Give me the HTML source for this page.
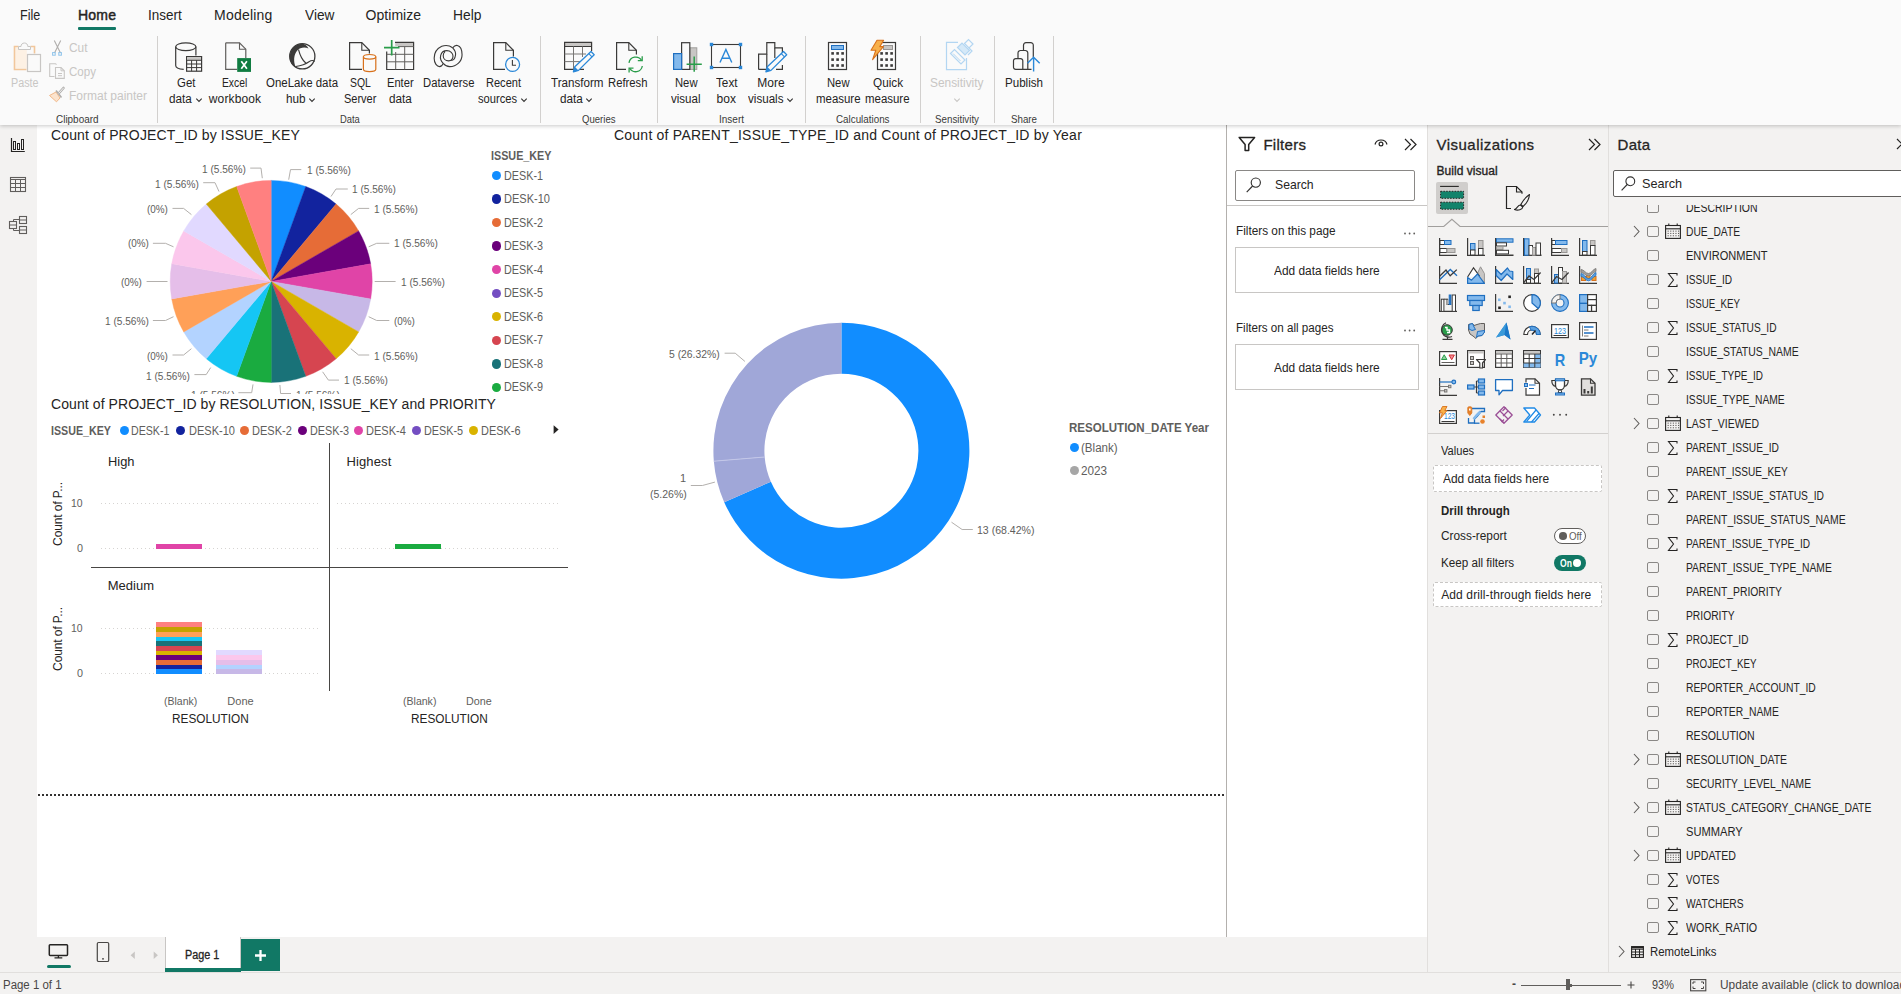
<!DOCTYPE html>
<html><head><meta charset="utf-8"><title>Power BI</title>
<style>
html,body{margin:0;padding:0;}
body{width:1901px;height:994px;overflow:hidden;position:relative;background:#f3f2f1;font-family:"Liberation Sans",sans-serif;}
.t{position:absolute;white-space:nowrap;display:block;}
.r{position:absolute;display:block;}
svg{overflow:visible;}
</style></head><body>
<div class="r" style="left:0px;top:0px;width:1901px;height:125px;background:#fafafa;box-shadow:0 1px 4px rgba(0,0,0,0.22);z-index:5;"></div>
<div class="r" style="left:0px;top:125px;width:37px;height:847px;background:#f3f2f1;"></div>
<div class="r" style="left:37px;top:125px;width:1189px;height:812px;background:#ffffff;"></div>
<div class="r" style="left:1226px;top:125px;width:1px;height:812px;background:#b3b0ad;"></div>
<div class="r" style="left:1227px;top:125px;width:200px;height:812px;background:#ffffff;"></div>
<div class="r" style="left:1427px;top:125px;width:1px;height:847px;background:#e1dfdd;"></div>
<div class="r" style="left:1428px;top:125px;width:180px;height:847px;background:#f3f2f1;"></div>
<div class="r" style="left:1608px;top:125px;width:1px;height:847px;background:#e1dfdd;"></div>
<div class="r" style="left:1609px;top:125px;width:292px;height:847px;background:#f3f2f1;"></div>
<div class="r" style="left:37px;top:937px;width:1390px;height:35px;background:#f3f2f1;"></div>
<div class="r" style="left:0px;top:972px;width:1901px;height:22px;background:#f3f2f1;border-top:1px solid #e1dfdd;box-sizing:border-box;"></div>
<div class="r" style="left:0;top:0;width:1901px;height:125px;z-index:6;">
<span class="t" style="left:20.00px;top:6.50px;font-size:14px;line-height:17px;color:#252423;transform:scaleX(0.8954);transform-origin:0 50%;">File</span>
<span class="t" style="left:78.10px;top:6.50px;font-size:14px;line-height:17px;color:#252423;letter-spacing:0.164px;-webkit-text-stroke:0.45px #252423;">Home</span>
<span class="t" style="left:147.80px;top:6.50px;font-size:14px;line-height:17px;color:#252423;transform:scaleX(0.9625);transform-origin:0 50%;">Insert</span>
<span class="t" style="left:214.10px;top:6.50px;font-size:14px;line-height:17px;color:#252423;letter-spacing:0.198px;">Modeling</span>
<span class="t" style="left:304.60px;top:6.50px;font-size:14px;line-height:17px;color:#252423;transform:scaleX(0.9770);transform-origin:0 50%;">View</span>
<span class="t" style="left:365.60px;top:6.50px;font-size:14px;line-height:17px;color:#252423;letter-spacing:0.033px;">Optimize</span>
<span class="t" style="left:452.90px;top:6.50px;font-size:14px;line-height:17px;color:#252423;transform:scaleX(0.9863);transform-origin:0 50%;">Help</span>
<div class="r" style="left:78px;top:27px;width:38px;height:3px;background:#117865;border-radius:1px;"></div>
<svg class="r" style="left:10px;top:40px;" width="34" height="34" viewBox="0 0 34 34">
<rect x="5.300" y="7.300" width="11.500" height="21.400" fill="#fdf1e4"/><path d="M8.5 6.5H4.5V29.5H16.5" fill="none" stroke="#f2c79b" stroke-width="1.6"/>
<path d="M20.5 6.5H24.5V13.5" fill="none" stroke="#f2c79b" stroke-width="1.6"/>
<path d="M8.5 9.5V6.5H11c0-2 1.2-3.5 3.4-3.5s3.4 1.5 3.4 3.5h2.7v3z" fill="#fafafa" stroke="#c8c6c4" stroke-width="1"/>
<rect x="17.5" y="14.5" width="13" height="17" fill="#fafafa" stroke="#c8c6c4" stroke-width="1.2"/>
</svg>
<span class="t" style="left:11.40px;top:75.70px;font-size:12px;line-height:14px;color:#c8c6c4;transform:scaleX(0.8962);transform-origin:0 50%;">Paste</span>
<svg class="r" style="left:50px;top:38px;" width="16" height="18" viewBox="0 0 16 18">
<path d="M4.3 2.5L10.5 15M10.7 2.5L4.5 15" stroke="#b0aeac" stroke-width="1.1" fill="none"/>
<rect x="2.6" y="14.6" width="2.6" height="2.6" fill="none" stroke="#8ec3ea" stroke-width="1"/>
<rect x="8.8" y="14.6" width="2.6" height="2.6" fill="none" stroke="#8ec3ea" stroke-width="1"/>
</svg>
<span class="t" style="left:69.00px;top:40.60px;font-size:12px;line-height:14px;color:#c8c6c4;transform:scaleX(0.9907);transform-origin:0 50%;">Cut</span>
<svg class="r" style="left:48px;top:62px;" width="18" height="18" viewBox="0 0 18 18">
<path d="M6.5 14.5H1.7V1.7H7.5L8.5 2.7" fill="none" stroke="#c8c6c4" stroke-width="1.1"/>
<path d="M7.5 5.5H13L16.3 8.8V16.4H7.5z" fill="#fafafa" stroke="#c8c6c4" stroke-width="1.1"/>
<path d="M13 5.5V8.8H16.3M10 11.5H14M10 13.7H14" fill="none" stroke="#c8c6c4" stroke-width="1"/>
</svg>
<span class="t" style="left:69.00px;top:64.80px;font-size:12px;line-height:14px;color:#c8c6c4;transform:scaleX(0.9638);transform-origin:0 50%;">Copy</span>
<svg class="r" style="left:48px;top:86px;" width="18" height="18" viewBox="0 0 18 18">
<path d="M1.5 9.5L8 6L12 12L8.5 15.8z" fill="#fbe3cd" stroke="#f2b888" stroke-width="1"/>
<path d="M8 4.5L13.5 11.5" stroke="#b0aeac" stroke-width="1.6"/>
<path d="M11 7L15.5 2" stroke="#b0aeac" stroke-width="2.6" stroke-linecap="round"/>
<path d="M11 7L15.5 2" stroke="#fafafa" stroke-width="0.9" stroke-linecap="round"/>
</svg>
<span class="t" style="left:69.00px;top:88.80px;font-size:12px;line-height:14px;color:#c8c6c4;transform:scaleX(0.9996);transform-origin:0 50%;">Format painter</span>
<span class="t" style="left:55.75px;top:112.50px;font-size:11px;line-height:13px;color:#3b3a39;transform:scaleX(0.9027);transform-origin:0 50%;">Clipboard</span>
<div class="r" style="left:157px;top:36px;width:1px;height:87px;background:#d2d0ce;"></div>
<div class="r" style="left:540px;top:36px;width:1px;height:87px;background:#d2d0ce;"></div>
<div class="r" style="left:657px;top:36px;width:1px;height:87px;background:#d2d0ce;"></div>
<div class="r" style="left:805px;top:36px;width:1px;height:87px;background:#d2d0ce;"></div>
<div class="r" style="left:920px;top:36px;width:1px;height:87px;background:#d2d0ce;"></div>
<div class="r" style="left:994px;top:36px;width:1px;height:87px;background:#d2d0ce;"></div>
<div class="r" style="left:1053px;top:36px;width:1px;height:87px;background:#d2d0ce;"></div>
<span class="t" style="left:177.20px;top:75.70px;font-size:12px;line-height:14px;color:#252423;transform:scaleX(0.9513);transform-origin:0 50%;">Get</span>
<span class="t" style="left:169.30px;top:91.60px;font-size:12px;line-height:14px;color:#252423;transform:scaleX(0.9762);transform-origin:0 50%;">data</span>
<svg class="r" style="left:195.60000000000002px;top:97.5px;" width="6" height="4" viewBox="0 0 6 4"><path d="M0.3 0.7L3 3.400L5.700 0.700" fill="none" stroke="#323130" stroke-width="1.1"/></svg>
<span class="t" style="left:222.40px;top:75.70px;font-size:12px;line-height:14px;color:#252423;transform:scaleX(0.8588);transform-origin:0 50%;">Excel</span>
<span class="t" style="left:208.80px;top:91.60px;font-size:12px;line-height:14px;color:#252423;letter-spacing:0.130px;">workbook</span>
<span class="t" style="left:265.60px;top:75.70px;font-size:12px;line-height:14px;color:#252423;transform:scaleX(0.9550);transform-origin:0 50%;">OneLake data</span>
<span class="t" style="left:286.10px;top:91.60px;font-size:12px;line-height:14px;color:#252423;transform:scaleX(0.9789);transform-origin:0 50%;">hub</span>
<svg class="r" style="left:309.20000000000005px;top:97.5px;" width="6" height="4" viewBox="0 0 6 4"><path d="M0.3 0.7L3 3.400L5.700 0.700" fill="none" stroke="#323130" stroke-width="1.1"/></svg>
<span class="t" style="left:349.60px;top:75.70px;font-size:12px;line-height:14px;color:#252423;transform:scaleX(0.8662);transform-origin:0 50%;">SQL</span>
<span class="t" style="left:343.80px;top:91.60px;font-size:12px;line-height:14px;color:#252423;transform:scaleX(0.9167);transform-origin:0 50%;">Server</span>
<span class="t" style="left:386.90px;top:75.70px;font-size:12px;line-height:14px;color:#252423;transform:scaleX(0.9274);transform-origin:0 50%;">Enter</span>
<span class="t" style="left:388.80px;top:91.60px;font-size:12px;line-height:14px;color:#252423;transform:scaleX(0.9762);transform-origin:0 50%;">data</span>
<span class="t" style="left:422.60px;top:75.70px;font-size:12px;line-height:14px;color:#252423;transform:scaleX(0.9398);transform-origin:0 50%;">Dataverse</span>
<span class="t" style="left:486.00px;top:75.70px;font-size:12px;line-height:14px;color:#252423;transform:scaleX(0.9205);transform-origin:0 50%;">Recent</span>
<span class="t" style="left:478.30px;top:91.60px;font-size:12px;line-height:14px;color:#252423;transform:scaleX(0.9282);transform-origin:0 50%;">sources</span>
<svg class="r" style="left:520.8px;top:97.5px;" width="6" height="4" viewBox="0 0 6 4"><path d="M0.3 0.7L3 3.400L5.700 0.700" fill="none" stroke="#323130" stroke-width="1.1"/></svg>
<span class="t" style="left:339.60px;top:112.50px;font-size:11px;line-height:13px;color:#3b3a39;transform:scaleX(0.8521);transform-origin:0 50%;">Data</span>
<span class="t" style="left:550.75px;top:75.70px;font-size:12px;line-height:14px;color:#252423;transform:scaleX(0.9681);transform-origin:0 50%;">Transform</span>
<span class="t" style="left:559.90px;top:91.60px;font-size:12px;line-height:14px;color:#252423;transform:scaleX(0.9762);transform-origin:0 50%;">data</span>
<svg class="r" style="left:586.1999999999999px;top:97.5px;" width="6" height="4" viewBox="0 0 6 4"><path d="M0.3 0.7L3 3.400L5.700 0.700" fill="none" stroke="#323130" stroke-width="1.1"/></svg>
<span class="t" style="left:607.85px;top:75.70px;font-size:12px;line-height:14px;color:#252423;transform:scaleX(0.9401);transform-origin:0 50%;">Refresh</span>
<span class="t" style="left:582.25px;top:112.50px;font-size:11px;line-height:13px;color:#3b3a39;transform:scaleX(0.8698);transform-origin:0 50%;">Queries</span>
<span class="t" style="left:674.75px;top:75.70px;font-size:12px;line-height:14px;color:#252423;transform:scaleX(0.9373);transform-origin:0 50%;">New</span>
<span class="t" style="left:671.25px;top:91.60px;font-size:12px;line-height:14px;color:#252423;transform:scaleX(0.9615);transform-origin:0 50%;">visual</span>
<span class="t" style="left:715.55px;top:75.70px;font-size:12px;line-height:14px;color:#252423;transform:scaleX(0.9769);transform-origin:0 50%;">Text</span>
<span class="t" style="left:716.55px;top:91.60px;font-size:12px;line-height:14px;color:#252423;letter-spacing:0.051px;">box</span>
<span class="t" style="left:757.25px;top:75.70px;font-size:12px;line-height:14px;color:#252423;letter-spacing:0.040px;">More</span>
<span class="t" style="left:747.55px;top:91.60px;font-size:12px;line-height:14px;color:#252423;transform:scaleX(0.9678);transform-origin:0 50%;">visuals</span>
<svg class="r" style="left:786.55px;top:97.5px;" width="6" height="4" viewBox="0 0 6 4"><path d="M0.3 0.7L3 3.400L5.700 0.700" fill="none" stroke="#323130" stroke-width="1.1"/></svg>
<span class="t" style="left:719.00px;top:112.50px;font-size:11px;line-height:13px;color:#3b3a39;transform:scaleX(0.9087);transform-origin:0 50%;">Insert</span>
<span class="t" style="left:827.05px;top:75.70px;font-size:12px;line-height:14px;color:#252423;transform:scaleX(0.9373);transform-origin:0 50%;">New</span>
<span class="t" style="left:816.05px;top:91.60px;font-size:12px;line-height:14px;color:#252423;transform:scaleX(0.9531);transform-origin:0 50%;">measure</span>
<span class="t" style="left:872.60px;top:75.70px;font-size:12px;line-height:14px;color:#252423;transform:scaleX(0.9780);transform-origin:0 50%;">Quick</span>
<span class="t" style="left:865.35px;top:91.60px;font-size:12px;line-height:14px;color:#252423;transform:scaleX(0.9531);transform-origin:0 50%;">measure</span>
<span class="t" style="left:835.85px;top:112.50px;font-size:11px;line-height:13px;color:#3b3a39;transform:scaleX(0.8929);transform-origin:0 50%;">Calculations</span>
<span class="t" style="left:930.25px;top:75.70px;font-size:12px;line-height:14px;color:#c8c6c4;transform:scaleX(0.9904);transform-origin:0 50%;">Sensitivity</span>
<svg class="r" style="left:954px;top:97.5px;" width="6" height="4" viewBox="0 0 6 4"><path d="M0.3 0.7L3 3.400L5.700 0.700" fill="none" stroke="#c8c6c4" stroke-width="1.1"/></svg>
<span class="t" style="left:935.00px;top:112.50px;font-size:11px;line-height:13px;color:#3b3a39;transform:scaleX(0.8886);transform-origin:0 50%;">Sensitivity</span>
<span class="t" style="left:1004.70px;top:75.70px;font-size:12px;line-height:14px;color:#252423;transform:scaleX(0.9655);transform-origin:0 50%;">Publish</span>
<span class="t" style="left:1010.70px;top:112.50px;font-size:11px;line-height:13px;color:#3b3a39;transform:scaleX(0.8858);transform-origin:0 50%;">Share</span>
<svg class="r" style="left:173px;top:40px;" width="32" height="34" viewBox="0 0 32 34">
<path d="M2.7 6.8V25.5c0 2.2 3.5 3.6 8 3.9" fill="none" stroke="#3b3a39" stroke-width="1.2"/>
<path d="M22.9 6.8V15.5" fill="none" stroke="#3b3a39" stroke-width="1.2"/>
<ellipse cx="12.8" cy="6.8" rx="10.1" ry="3.9" fill="none" stroke="#3b3a39" stroke-width="1.2"/>
<rect x="13.6" y="16.6" width="15" height="14.6" fill="#fafafa" stroke="#3b3a39" stroke-width="1.2"/>
<rect x="14.2" y="17.2" width="13.8" height="2.8" fill="#c8c6c4"/>
<path d="M13.6 20.3H28.6M13.6 24H28.6M13.6 27.6H28.6M18.6 20.3V31.2M23.6 20.3V31.2" stroke="#3b3a39" stroke-width="1" fill="none"/>
</svg>
<svg class="r" style="left:223px;top:40px;" width="30" height="34" viewBox="0 0 30 34">
<path d="M2.7 2.8H16.5L22.8 9.2V18M14 29.4H2.7V2.8" fill="none" stroke="#605e5c" stroke-width="1.2"/>
<path d="M16.5 2.8V9.2H22.8" fill="none" stroke="#605e5c" stroke-width="1.1"/>
<rect x="14.2" y="18.1" width="13.8" height="13.8" fill="#107c41"/>
<path d="M18.3 21.3L23.9 28.8M23.9 21.3L18.3 28.8" stroke="#ffffff" stroke-width="1.7" fill="none"/>
</svg>
<svg class="r" style="left:287px;top:41px;" width="32" height="32" viewBox="0 0 32 32">
<circle cx="15.3" cy="15.3" r="12.6" fill="none" stroke="#3b3a39" stroke-width="1.3"/>
<path d="M14 2.8C6 4 2.6 10 2.8 16.5c.2 5 3 8.3 6 9.800C6.300 21 6.500 13.500 10.500 9.300 13 6.600 17.500 5.800 21.500 7.500 19.800 4.300 17.500 2.600 14 2.800z" fill="#3b3a39"/>
<path d="M11.500 8.500C13 14.500 15.500 19.500 19 22.300" fill="none" stroke="#3b3a39" stroke-width="1.100"/>
<path d="M8.800 25.500C14 24.800 18.500 23.300 22 20.800 24.500 19 26.500 19.300 27.600 20.500" fill="none" stroke="#3b3a39" stroke-width="1.100"/>
</svg>
<svg class="r" style="left:347px;top:40px;" width="32" height="34" viewBox="0 0 32 34">
<path d="M15 29.400H2.600V2.700H14.800L22.400 10.300V13.600" fill="none" stroke="#3b3a39" stroke-width="1.200"/>
<path d="M14.800 2.700V10.300H22.400" fill="none" stroke="#3b3a39" stroke-width="1.100"/>
<path d="M16.400 16.800V29.300c0 1.300 2.800 2.300 6.200 2.300s6.200-1 6.200-2.300V16.800" fill="#fafafa" stroke="#d8711c" stroke-width="1.200"/>
<ellipse cx="22.600" cy="16.800" rx="6.200" ry="2.300" fill="#fafafa" stroke="#d8711c" stroke-width="1.200"/>
</svg>
<svg class="r" style="left:384px;top:38px;" width="32" height="34" viewBox="0 0 32 34">
<rect x="11.200" y="4.800" width="17.900" height="3.200" fill="#c8c6c4"/>
<path d="M11 4.300H29.600V31.500H2.700V13.500" fill="none" stroke="#3b3a39" stroke-width="1.200"/>
<path d="M14 8.600H29.600M2.700 16.300H29.600M2.700 23.800H29.600M11.700 14V31.500M20.700 8.600V31.500" fill="none" stroke="#605e5c" stroke-width="1"/>
<path d="M0 9.700H15.500M7.700 2V17.500" stroke="#2a9d4a" stroke-width="1.700" fill="none"/>
</svg>
<svg class="r" style="left:428px;top:38px;" width="40" height="36" viewBox="0 0 40 36"><g transform="scale(0.03623)" fill="none" stroke="#3b3a39" stroke-width="31">
<path d="M680 270C600 210 480 190 380 230C250 290 170 420 170 560C170 700 250 790 320 790C370 790 400 750 420 700C360 640 330 560 350 480C370 400 440 350 520 350C620 350 690 420 690 500C690 580 640 630 570 630C480 630 420 570 420 490C420 430 450 390 470 375"/>
<path d="M680 270C720 220 770 195 810 205C890 225 940 330 940 460C940 640 790 790 600 790C530 790 460 750 420 700"/>
<path d="M680 270C740 330 770 400 760 470C745 570 700 620 640 620"/>
</g></svg>
<svg class="r" style="left:491px;top:40px;" width="32" height="34" viewBox="0 0 32 34">
<path d="M14 29.400H2.600V2.700H14.800L22.400 10.300V16.500" fill="none" stroke="#3b3a39" stroke-width="1.200"/>
<path d="M14.800 2.700V10.300H22.400" fill="none" stroke="#3b3a39" stroke-width="1.100"/>
<circle cx="21.600" cy="24.400" r="7" fill="#fafafa" stroke="#2b88d8" stroke-width="1.300"/>
<path d="M21.400 20V25.200H25" fill="none" stroke="#3b3a39" stroke-width="1.100"/>
</svg>
<svg class="r" style="left:562px;top:40px;" width="34" height="34" viewBox="0 0 34 34">
<rect x="2.600" y="2.700" width="27" height="3.400" fill="#c8c6c4"/>
<path d="M22 29.400H2.600V2.400H29.600V11" fill="none" stroke="#3b3a39" stroke-width="1.200"/>
<path d="M2.600 6.500H29.600" stroke="#3b3a39" stroke-width="1"/>
<path d="M2.600 14H24M2.600 21.600H18M11.500 6.500V29.400M20.500 6.500V17" fill="none" stroke="#797775" stroke-width="1"/>
<path d="M29 11.500L32.200 14.700 16.500 30.400 11.400 31.800 12.800 26.700z" fill="#fafafa" stroke="#2b88d8" stroke-width="1.300" stroke-linejoin="round"/>
<path d="M12.800 26.700L16.500 30.400 11.400 31.800z" fill="#2b88d8"/>
<path d="M26.800 13.700L30 16.900" stroke="#2b88d8" stroke-width="1.100"/>
</svg>
<svg class="r" style="left:614px;top:40px;" width="32" height="34" viewBox="0 0 32 34">
<path d="M12 29.400H2.600V2.700H14.800L22.400 10.300V14.500" fill="none" stroke="#3b3a39" stroke-width="1.200"/>
<path d="M14.800 2.700V10.300H22.400" fill="none" stroke="#3b3a39" stroke-width="1.100"/>
<path d="M15 22.800A6.800 6.800 0 0 1 27.600 20.500" fill="none" stroke="#2a9d4a" stroke-width="1.300"/>
<path d="M28.200 16.300V20.700H23.800" fill="none" stroke="#2a9d4a" stroke-width="1.300"/>
<path d="M28.300 26A6.800 6.800 0 0 1 15.700 28.300" fill="none" stroke="#2a9d4a" stroke-width="1.300"/>
<path d="M15.100 32.500V28.100H19.500" fill="none" stroke="#2a9d4a" stroke-width="1.300"/>
</svg>
<svg class="r" style="left:671px;top:40px;" width="34" height="34" viewBox="0 0 34 34">
<rect x="18.800" y="7.800" width="7" height="21.600" fill="#c8c6c4" stroke="#a19f9d" stroke-width="1"/>
<rect x="10.600" y="2.700" width="8.200" height="26.700" fill="#fafafa" stroke="#3b3a39" stroke-width="1.200"/>
<rect x="2.600" y="13.600" width="8" height="15.800" fill="#83b9ec" stroke="#1f6fc0" stroke-width="1.200"/>
<path d="M15.600 24.200H30.800M23.200 16.600V31.800" stroke="#2a9d4a" stroke-width="1.500" fill="none"/>
</svg>
<svg class="r" style="left:709px;top:42px;" width="34" height="28" viewBox="0 0 34 28">
<rect x="2.500" y="2.500" width="29" height="23" fill="none" stroke="#3b3a39" stroke-width="1.100"/>
<rect x="0.800" y="0.800" width="3.400" height="3.400" fill="#2b88d8"/><rect x="29.800" y="0.800" width="3.400" height="3.400" fill="#2b88d8"/>
<rect x="0.800" y="23.800" width="3.400" height="3.400" fill="#2b88d8"/><rect x="29.800" y="23.800" width="3.400" height="3.400" fill="#2b88d8"/>
<path d="M11 20.500L16.900 7.500 22.800 20.500M13 16.200H20.800" fill="none" stroke="#2b88d8" stroke-width="1.400"/>
</svg>
<svg class="r" style="left:756px;top:40px;" width="34" height="34" viewBox="0 0 34 34">
<path d="M2.600 29.400V14.200H10.800V2.700H18.800V7.800H26.400V13" fill="none" stroke="#3b3a39" stroke-width="1.200"/>
<path d="M10.800 14.200V29.400M18.800 7.800V18M2.600 29.400H12M26.400 25V29.400H20" fill="none" stroke="#3b3a39" stroke-width="1.200"/>
<path d="M27.500 11.500L30.700 14.700 15 30.400 9.900 31.800 11.300 26.700z" fill="#fafafa" stroke="#2b88d8" stroke-width="1.300" stroke-linejoin="round"/>
<path d="M11.300 26.700L15 30.400 9.900 31.800z" fill="#2b88d8"/>
<path d="M25.300 13.700L28.500 16.900" stroke="#2b88d8" stroke-width="1.100"/>
</svg>
<svg class="r" style="left:828px;top:42px;" width="20" height="30" viewBox="0 0 20 30"><rect x="0.500" y="0.500" width="18" height="27" fill="#fafafa" stroke="#3b3a39" stroke-width="1.200"/><rect x="3.500" y="3.500" width="12" height="4" fill="#83b9ec" stroke="#1f6fc0" stroke-width="1"/><rect x="3.3" y="10.1" width="2.600" height="2.600" fill="#3b3a39"/><rect x="8.3" y="10.1" width="2.600" height="2.600" fill="#3b3a39"/><rect x="13.3" y="10.1" width="2.600" height="2.600" fill="#3b3a39"/><rect x="3.3" y="16.3" width="2.600" height="2.600" fill="#3b3a39"/><rect x="8.3" y="16.3" width="2.600" height="2.600" fill="#3b3a39"/><rect x="13.3" y="16.3" width="2.600" height="2.600" fill="#3b3a39"/><rect x="3.3" y="22.2" width="2.600" height="2.600" fill="#3b3a39"/><rect x="8.3" y="22.2" width="2.600" height="2.600" fill="#3b3a39"/><rect x="13.3" y="22.2" width="2.600" height="2.600" fill="#3b3a39"/></svg>
<svg class="r" style="left:877px;top:42px;" width="20" height="30" viewBox="0 0 20 30"><rect x="0.500" y="0.500" width="18" height="27" fill="#fafafa" stroke="#3b3a39" stroke-width="1.200"/><rect x="6.500" y="3.500" width="9" height="4" fill="#c8c6c4" stroke="#979593" stroke-width="1"/><rect x="3.3" y="10.1" width="2.600" height="2.600" fill="#3b3a39"/><rect x="8.3" y="10.1" width="2.600" height="2.600" fill="#3b3a39"/><rect x="13.3" y="10.1" width="2.600" height="2.600" fill="#3b3a39"/><rect x="3.3" y="16.3" width="2.600" height="2.600" fill="#3b3a39"/><rect x="8.3" y="16.3" width="2.600" height="2.600" fill="#3b3a39"/><rect x="13.3" y="16.3" width="2.600" height="2.600" fill="#3b3a39"/><rect x="3.3" y="22.2" width="2.600" height="2.600" fill="#3b3a39"/><rect x="8.3" y="22.2" width="2.600" height="2.600" fill="#3b3a39"/><rect x="13.3" y="22.2" width="2.600" height="2.600" fill="#3b3a39"/></svg>
<svg class="r" style="left:869px;top:39px;" width="18" height="22" viewBox="0 0 18 22"><path d="M8 1.200H14.600L10.800 7.600H14.400L3.600 20.600 6.800 11.200H2z" fill="#f8b04a" stroke="#d8711c" stroke-width="1.100" stroke-linejoin="round"/></svg>
<svg class="r" style="left:944px;top:38px;" width="32" height="34" viewBox="0 0 32 34">
<path d="M14 4.400H2.500V31.600H22.500V20" fill="none" stroke="#b3d6f2" stroke-width="1.200"/>
<path d="M6.500 15.500L10.500 11.500 21 22 17 26z" fill="none" stroke="#b3d6f2" stroke-width="1.200"/>
<path d="M9 15.500L16.500 23" stroke="#b3d6f2" stroke-width="1"/>
<path d="M13.500 9.500L18 5 25.500 12.500 21 17z" fill="#d5e9f8" stroke="#b3d6f2" stroke-width="1.200"/>
<path d="M20.500 5.500L24.500 1.500 29 6 25 10z" fill="#fafafa" stroke="#b3d6f2" stroke-width="1.200"/>
<path d="M25 10L28 13 24 17" fill="none" stroke="#b3d6f2" stroke-width="1.200"/>
</svg>
<svg class="r" style="left:1011px;top:40px;" width="32" height="34" viewBox="0 0 32 34">
<path d="M12.500 10.500V5.200a2.500 2.500 0 0 1 2.500-2.500h4.800a2.500 2.500 0 0 1 2.500 2.500V17" fill="none" stroke="#3b3a39" stroke-width="1.200"/>
<path d="M7 18.500V13a2.500 2.500 0 0 1 2.500-2.500h4.800a2.500 2.500 0 0 1 2.500 2.500V29.400" fill="none" stroke="#3b3a39" stroke-width="1.200"/>
<path d="M11.800 29.400H4.700a2.200 2.200 0 0 1-2.200-2.200V20.800a2.200 2.200 0 0 1 2.200-2.200h4.900a2.200 2.200 0 0 1 2.200 2.200zM11.800 29.400H20.500" fill="none" stroke="#3b3a39" stroke-width="1.200"/>
<path d="M22.600 31.600V17.500M16.500 23.300L22.600 17.200 28.700 23.300" fill="none" stroke="#2b88d8" stroke-width="1.400"/>
</svg>
</div>
<span class="t" style="left:51.00px;top:126.50px;font-size:14px;line-height:17px;color:#252423;letter-spacing:0.146px;">Count of PROJECT_ID by ISSUE_KEY</span>
<span class="t" style="left:614.00px;top:126.50px;font-size:14px;line-height:17px;color:#252423;letter-spacing:0.227px;">Count of PARENT_ISSUE_TYPE_ID and Count of PROJECT_ID by Year</span>
<span class="t" style="left:51.00px;top:395.50px;font-size:14px;line-height:17px;color:#252423;letter-spacing:0.086px;">Count of PROJECT_ID by RESOLUTION, ISSUE_KEY and PRIORITY</span>
<div class="r" style="left:37px;top:125px;width:560px;height:268.500px;overflow:hidden;">
<svg class="r" style="left:0;top:0" width="560" height="280" viewBox="37 125 560 280"><path d="M271.20 281.40L271.20 180.40A101.0 101.0 0 0 1 305.74 186.49Z" fill="#118DFF" stroke="#118DFF" stroke-width="0.4"/><path d="M271.20 281.40L305.74 186.49A101.0 101.0 0 0 1 336.12 204.03Z" fill="#12239E" stroke="#12239E" stroke-width="0.4"/><path d="M271.20 281.40L336.12 204.03A101.0 101.0 0 0 1 358.67 230.90Z" fill="#E66C37" stroke="#E66C37" stroke-width="0.4"/><path d="M271.20 281.40L358.67 230.90A101.0 101.0 0 0 1 370.67 263.86Z" fill="#6B007B" stroke="#6B007B" stroke-width="0.4"/><path d="M271.20 281.40L370.67 263.86A101.0 101.0 0 0 1 370.67 298.94Z" fill="#E044A7" stroke="#E044A7" stroke-width="0.4"/><path d="M271.20 281.40L370.67 298.94A101.0 101.0 0 0 1 358.67 331.90Z" fill="#C7B8E7" stroke="#C7B8E7" stroke-width="0.4"/><path d="M271.20 281.40L358.67 331.90A101.0 101.0 0 0 1 336.12 358.77Z" fill="#D9B300" stroke="#D9B300" stroke-width="0.4"/><path d="M271.20 281.40L336.12 358.77A101.0 101.0 0 0 1 305.74 376.31Z" fill="#D64550" stroke="#D64550" stroke-width="0.4"/><path d="M271.20 281.40L305.74 376.31A101.0 101.0 0 0 1 271.20 382.40Z" fill="#197278" stroke="#197278" stroke-width="0.4"/><path d="M271.20 281.40L271.20 382.40A101.0 101.0 0 0 1 236.66 376.31Z" fill="#1AAB40" stroke="#1AAB40" stroke-width="0.4"/><path d="M271.20 281.40L236.66 376.31A101.0 101.0 0 0 1 206.28 358.77Z" fill="#15C6F4" stroke="#15C6F4" stroke-width="0.4"/><path d="M271.20 281.40L206.28 358.77A101.0 101.0 0 0 1 183.73 331.90Z" fill="#B3D3FF" stroke="#B3D3FF" stroke-width="0.4"/><path d="M271.20 281.40L183.73 331.90A101.0 101.0 0 0 1 171.73 298.94Z" fill="#FFA058" stroke="#FFA058" stroke-width="0.4"/><path d="M271.20 281.40L171.73 298.94A101.0 101.0 0 0 1 171.73 263.86Z" fill="#E5BEE9" stroke="#E5BEE9" stroke-width="0.4"/><path d="M271.20 281.40L171.73 263.86A101.0 101.0 0 0 1 183.73 230.90Z" fill="#FBC7EC" stroke="#FBC7EC" stroke-width="0.4"/><path d="M271.20 281.40L183.73 230.90A101.0 101.0 0 0 1 206.28 204.03Z" fill="#E1D9FF" stroke="#E1D9FF" stroke-width="0.4"/><path d="M271.20 281.40L206.28 204.03A101.0 101.0 0 0 1 236.66 186.49Z" fill="#C4A200" stroke="#C4A200" stroke-width="0.4"/><path d="M271.20 281.40L236.66 186.49A101.0 101.0 0 0 1 271.20 180.40Z" fill="#FF8080" stroke="#FF8080" stroke-width="0.4"/><path d="M288.7 179.7L290.5 169.6L301.3 169.6" fill="none" stroke="#b3b0ad" stroke-width="1"/><path d="M331.0 196.5L336.0 189.0L347.8 189.0" fill="none" stroke="#b3b0ad" stroke-width="1"/><path d="M350.8 214.6L358.6 208.4L369.2 208.4" fill="none" stroke="#b3b0ad" stroke-width="1"/><path d="M368.7 246.8L376.7 243.3L389.3 243.3" fill="none" stroke="#b3b0ad" stroke-width="1"/><path d="M374.7 281.5L395.6 281.5" fill="none" stroke="#b3b0ad" stroke-width="1"/><path d="M368.7 316.7L376.7 320.5L389.3 320.5" fill="none" stroke="#b3b0ad" stroke-width="1"/><path d="M350.8 348.7L358.6 355.0L369.2 355.0" fill="none" stroke="#b3b0ad" stroke-width="1"/><path d="M322.6 371.8L328.4 380.1L339.0 380.1" fill="none" stroke="#b3b0ad" stroke-width="1"/><path d="M279.9 385.0L280.6 393.5L291.0 393.5" fill="none" stroke="#b3b0ad" stroke-width="1"/><path d="M253.0 384.4L251.7 392.7L238.4 392.7" fill="none" stroke="#b3b0ad" stroke-width="1"/><path d="M210.7 367.6L206.2 374.6L194.4 374.6" fill="none" stroke="#b3b0ad" stroke-width="1"/><path d="M191.4 348.7L183.6 355.0L172.5 355.0" fill="none" stroke="#b3b0ad" stroke-width="1"/><path d="M173.5 316.7L165.5 320.5L152.9 320.5" fill="none" stroke="#b3b0ad" stroke-width="1"/><path d="M167.5 281.5L146.6 281.5" fill="none" stroke="#b3b0ad" stroke-width="1"/><path d="M173.5 246.8L165.5 243.3L152.9 243.3" fill="none" stroke="#b3b0ad" stroke-width="1"/><path d="M191.4 214.6L183.6 208.4L172.5 208.4" fill="none" stroke="#b3b0ad" stroke-width="1"/><path d="M219.0 191.5L215.0 182.7L203.2 182.7" fill="none" stroke="#b3b0ad" stroke-width="1"/><path d="M262.3 178.2L261.0 168.1L250.2 168.1" fill="none" stroke="#b3b0ad" stroke-width="1"/></svg>
<span class="t" style="left:269.80px;top:38.60px;font-size:11px;line-height:13px;color:#605e5c;transform:scaleX(0.9184);transform-origin:0 50%;">1 (5.56%)</span>
<span class="t" style="left:315.10px;top:58.00px;font-size:11px;line-height:13px;color:#605e5c;transform:scaleX(0.9184);transform-origin:0 50%;">1 (5.56%)</span>
<span class="t" style="left:337.20px;top:78.10px;font-size:11px;line-height:13px;color:#605e5c;transform:scaleX(0.9184);transform-origin:0 50%;">1 (5.56%)</span>
<span class="t" style="left:356.80px;top:111.80px;font-size:11px;line-height:13px;color:#605e5c;transform:scaleX(0.9184);transform-origin:0 50%;">1 (5.56%)</span>
<span class="t" style="left:363.90px;top:150.50px;font-size:11px;line-height:13px;color:#605e5c;transform:scaleX(0.9184);transform-origin:0 50%;">1 (5.56%)</span>
<span class="t" style="left:356.60px;top:190.00px;font-size:11px;line-height:13px;color:#605e5c;transform:scaleX(0.8999);transform-origin:0 50%;">(0%)</span>
<span class="t" style="left:337.20px;top:224.70px;font-size:11px;line-height:13px;color:#605e5c;transform:scaleX(0.9184);transform-origin:0 50%;">1 (5.56%)</span>
<span class="t" style="left:306.50px;top:249.40px;font-size:11px;line-height:13px;color:#605e5c;transform:scaleX(0.9184);transform-origin:0 50%;">1 (5.56%)</span>
<span class="t" style="left:259.20px;top:263.80px;font-size:11px;line-height:13px;color:#605e5c;transform:scaleX(0.9184);transform-origin:0 50%;">1 (5.56%)</span>
<span class="t" style="left:153.80px;top:263.80px;font-size:11px;line-height:13px;color:#605e5c;transform:scaleX(0.9184);transform-origin:0 50%;">1 (5.56%)</span>
<span class="t" style="left:109.30px;top:244.90px;font-size:11px;line-height:13px;color:#605e5c;transform:scaleX(0.9184);transform-origin:0 50%;">1 (5.56%)</span>
<span class="t" style="left:110.30px;top:224.70px;font-size:11px;line-height:13px;color:#605e5c;transform:scaleX(0.8999);transform-origin:0 50%;">(0%)</span>
<span class="t" style="left:67.60px;top:190.00px;font-size:11px;line-height:13px;color:#605e5c;transform:scaleX(0.9184);transform-origin:0 50%;">1 (5.56%)</span>
<span class="t" style="left:83.70px;top:150.50px;font-size:11px;line-height:13px;color:#605e5c;transform:scaleX(0.8999);transform-origin:0 50%;">(0%)</span>
<span class="t" style="left:90.50px;top:111.80px;font-size:11px;line-height:13px;color:#605e5c;transform:scaleX(0.8999);transform-origin:0 50%;">(0%)</span>
<span class="t" style="left:110.30px;top:78.10px;font-size:11px;line-height:13px;color:#605e5c;transform:scaleX(0.8999);transform-origin:0 50%;">(0%)</span>
<span class="t" style="left:117.90px;top:52.50px;font-size:11px;line-height:13px;color:#605e5c;transform:scaleX(0.9184);transform-origin:0 50%;">1 (5.56%)</span>
<span class="t" style="left:165.10px;top:38.10px;font-size:11px;line-height:13px;color:#605e5c;transform:scaleX(0.9184);transform-origin:0 50%;">1 (5.56%)</span>
</div>
<span class="t" style="left:491.00px;top:148.70px;font-size:12px;line-height:14px;color:#605e5c;font-weight:bold;transform:scaleX(0.8982);transform-origin:0 50%;">ISSUE_KEY</span>
<div class="r" style="left:480px;top:160px;width:110px;height:233.500px;overflow:hidden;">
<div class="r" style="left:11.800000000000011px;top:10.900000000000006px;width:9.4px;height:9.4px;background:#118DFF;border-radius:50%;"></div>
<span class="t" style="left:24.10px;top:8.60px;font-size:12px;line-height:14px;color:#605e5c;transform:scaleX(0.8997);transform-origin:0 50%;">DESK-1</span>
<div class="r" style="left:11.800000000000011px;top:34.43000000000001px;width:9.4px;height:9.4px;background:#12239E;border-radius:50%;"></div>
<span class="t" style="left:24.10px;top:32.13px;font-size:12px;line-height:14px;color:#605e5c;transform:scaleX(0.9196);transform-origin:0 50%;">DESK-10</span>
<div class="r" style="left:11.800000000000011px;top:57.96000000000001px;width:9.4px;height:9.4px;background:#E66C37;border-radius:50%;"></div>
<span class="t" style="left:24.10px;top:55.66px;font-size:12px;line-height:14px;color:#605e5c;transform:scaleX(0.8997);transform-origin:0 50%;">DESK-2</span>
<div class="r" style="left:11.800000000000011px;top:81.49000000000001px;width:9.4px;height:9.4px;background:#6B007B;border-radius:50%;"></div>
<span class="t" style="left:24.10px;top:79.19px;font-size:12px;line-height:14px;color:#605e5c;transform:scaleX(0.8997);transform-origin:0 50%;">DESK-3</span>
<div class="r" style="left:11.800000000000011px;top:105.02000000000004px;width:9.4px;height:9.4px;background:#E044A7;border-radius:50%;"></div>
<span class="t" style="left:24.10px;top:102.72px;font-size:12px;line-height:14px;color:#605e5c;transform:scaleX(0.8997);transform-origin:0 50%;">DESK-4</span>
<div class="r" style="left:11.800000000000011px;top:128.55px;width:9.4px;height:9.4px;background:#744EC2;border-radius:50%;"></div>
<span class="t" style="left:24.10px;top:126.25px;font-size:12px;line-height:14px;color:#605e5c;transform:scaleX(0.8997);transform-origin:0 50%;">DESK-5</span>
<div class="r" style="left:11.800000000000011px;top:152.07999999999998px;width:9.4px;height:9.4px;background:#D9B300;border-radius:50%;"></div>
<span class="t" style="left:24.10px;top:149.78px;font-size:12px;line-height:14px;color:#605e5c;transform:scaleX(0.8997);transform-origin:0 50%;">DESK-6</span>
<div class="r" style="left:11.800000000000011px;top:175.61px;width:9.4px;height:9.4px;background:#D64550;border-radius:50%;"></div>
<span class="t" style="left:24.10px;top:173.31px;font-size:12px;line-height:14px;color:#605e5c;transform:scaleX(0.8997);transform-origin:0 50%;">DESK-7</span>
<div class="r" style="left:11.800000000000011px;top:199.14000000000004px;width:9.4px;height:9.4px;background:#197278;border-radius:50%;"></div>
<span class="t" style="left:24.10px;top:196.84px;font-size:12px;line-height:14px;color:#605e5c;transform:scaleX(0.8997);transform-origin:0 50%;">DESK-8</span>
<div class="r" style="left:11.800000000000011px;top:222.67000000000002px;width:9.4px;height:9.4px;background:#1AAB40;border-radius:50%;"></div>
<span class="t" style="left:24.10px;top:220.37px;font-size:12px;line-height:14px;color:#605e5c;transform:scaleX(0.8997);transform-origin:0 50%;">DESK-9</span>
</div>
<span class="t" style="left:50.90px;top:423.70px;font-size:12px;line-height:14px;color:#605e5c;font-weight:bold;transform:scaleX(0.8907);transform-origin:0 50%;">ISSUE_KEY</span>
<div class="r" style="left:119.5px;top:425.8px;width:9px;height:9px;background:#118DFF;border-radius:50%;"></div>
<span class="t" style="left:131.30px;top:423.70px;font-size:12px;line-height:14px;color:#605e5c;transform:scaleX(0.8859);transform-origin:0 50%;">DESK-1</span>
<div class="r" style="left:176.0px;top:425.8px;width:9px;height:9px;background:#12239E;border-radius:50%;"></div>
<span class="t" style="left:188.50px;top:423.70px;font-size:12px;line-height:14px;color:#605e5c;transform:scaleX(0.9196);transform-origin:0 50%;">DESK-10</span>
<div class="r" style="left:240.1px;top:425.8px;width:9px;height:9px;background:#E66C37;border-radius:50%;"></div>
<span class="t" style="left:251.90px;top:423.70px;font-size:12px;line-height:14px;color:#605e5c;transform:scaleX(0.9181);transform-origin:0 50%;">DESK-2</span>
<div class="r" style="left:297.7px;top:425.8px;width:9px;height:9px;background:#6B007B;border-radius:50%;"></div>
<span class="t" style="left:309.50px;top:423.70px;font-size:12px;line-height:14px;color:#605e5c;transform:scaleX(0.9020);transform-origin:0 50%;">DESK-3</span>
<div class="r" style="left:354.2px;top:425.8px;width:9px;height:9px;background:#E044A7;border-radius:50%;"></div>
<span class="t" style="left:366.00px;top:423.70px;font-size:12px;line-height:14px;color:#605e5c;transform:scaleX(0.9181);transform-origin:0 50%;">DESK-4</span>
<div class="r" style="left:412.2px;top:425.8px;width:9px;height:9px;background:#744EC2;border-radius:50%;"></div>
<span class="t" style="left:423.90px;top:423.70px;font-size:12px;line-height:14px;color:#605e5c;transform:scaleX(0.9020);transform-origin:0 50%;">DESK-5</span>
<div class="r" style="left:469.4px;top:425.8px;width:9px;height:9px;background:#D9B300;border-radius:50%;"></div>
<span class="t" style="left:481.10px;top:423.70px;font-size:12px;line-height:14px;color:#605e5c;transform:scaleX(0.9112);transform-origin:0 50%;">DESK-6</span>
<svg class="r" style="left:552px;top:424px;" width="8" height="12" viewBox="0 0 8 12"><path d="M1.600 1.300L6.600 5.600 1.600 9.900z" fill="#252423"/></svg>
<span class="t" style="left:107.70px;top:453.50px;font-size:13px;line-height:16px;color:#252423;transform:scaleX(0.9912);transform-origin:0 50%;">High</span>
<span class="t" style="left:346.40px;top:453.50px;font-size:13px;line-height:16px;color:#252423;letter-spacing:0.132px;">Highest</span>
<span class="t" style="left:107.70px;top:577.70px;font-size:13px;line-height:16px;color:#252423;letter-spacing:0.027px;">Medium</span>
<div class="r" style="left:329px;top:443px;width:1px;height:248px;background:#484644;"></div>
<div class="r" style="left:91px;top:567px;width:477px;height:1px;background:#484644;"></div>
<div class="r" style="left:101px;top:503px;width:218px;height:1px;background:transparent;background:repeating-linear-gradient(to right,#d6d4d2 0 1px,transparent 1px 4px);"></div>
<div class="r" style="left:337px;top:503px;width:223px;height:1px;background:transparent;background:repeating-linear-gradient(to right,#d6d4d2 0 1px,transparent 1px 4px);"></div>
<div class="r" style="left:101px;top:548px;width:218px;height:1px;background:transparent;background:repeating-linear-gradient(to right,#d6d4d2 0 1px,transparent 1px 4px);"></div>
<div class="r" style="left:337px;top:548px;width:223px;height:1px;background:transparent;background:repeating-linear-gradient(to right,#d6d4d2 0 1px,transparent 1px 4px);"></div>
<div class="r" style="left:101px;top:628px;width:218px;height:1px;background:transparent;background:repeating-linear-gradient(to right,#d6d4d2 0 1px,transparent 1px 4px);"></div>
<div class="r" style="left:101px;top:673px;width:218px;height:1px;background:transparent;background:repeating-linear-gradient(to right,#d6d4d2 0 1px,transparent 1px 4px);"></div>
<span class="t" style="left:71.00px;top:496.80px;font-size:11px;line-height:13px;color:#605e5c;transform:scaleX(0.9481);transform-origin:0 50%;">10</span>
<span class="t" style="left:76.60px;top:542.10px;font-size:11px;line-height:13px;color:#605e5c;transform:scaleX(0.9808);transform-origin:0 50%;">0</span>
<span class="t" style="left:71.00px;top:621.80px;font-size:11px;line-height:13px;color:#605e5c;transform:scaleX(0.9481);transform-origin:0 50%;">10</span>
<span class="t" style="left:76.60px;top:667.10px;font-size:11px;line-height:13px;color:#605e5c;transform:scaleX(0.9808);transform-origin:0 50%;">0</span>
<span class="t" style="left:18.1px;top:507px;width:80px;text-align:center;font-size:12px;line-height:14px;color:#252423;transform:rotate(-90deg);letter-spacing:-0.100px;">Count of P...</span>
<span class="t" style="left:18.1px;top:631.6px;width:80px;text-align:center;font-size:12px;line-height:14px;color:#252423;transform:rotate(-90deg);letter-spacing:-0.100px;">Count of P...</span>
<div class="r" style="left:156.3px;top:544.1px;width:45.6px;height:5px;background:#E044A7;"></div>
<div class="r" style="left:394.9px;top:544.1px;width:45.7px;height:5px;background:#1AAB40;"></div>
<div class="r" style="left:156.3px;top:669.03px;width:45.6px;height:4.97px;background:#118DFF;"></div>
<div class="r" style="left:156.3px;top:664.35px;width:45.6px;height:4.97px;background:#12239E;"></div>
<div class="r" style="left:156.3px;top:659.68px;width:45.6px;height:4.97px;background:#E66C37;"></div>
<div class="r" style="left:156.3px;top:655.01px;width:45.6px;height:4.97px;background:#6B007B;"></div>
<div class="r" style="left:156.3px;top:650.34px;width:45.6px;height:4.97px;background:#D9B300;"></div>
<div class="r" style="left:156.3px;top:645.66px;width:45.6px;height:4.97px;background:#D64550;"></div>
<div class="r" style="left:156.3px;top:640.99px;width:45.6px;height:4.97px;background:#197278;"></div>
<div class="r" style="left:156.3px;top:636.32px;width:45.6px;height:4.97px;background:#15C6F4;"></div>
<div class="r" style="left:156.3px;top:631.65px;width:45.6px;height:4.97px;background:#FFA058;"></div>
<div class="r" style="left:156.3px;top:626.97px;width:45.6px;height:4.97px;background:#C4A200;"></div>
<div class="r" style="left:156.3px;top:622.3px;width:45.6px;height:4.97px;background:#FF8080;"></div>
<div class="r" style="left:216.2px;top:669.03px;width:45.6px;height:4.97px;background:#C7B8E7;"></div>
<div class="r" style="left:216.2px;top:664.35px;width:45.6px;height:4.97px;background:#B3D3FF;"></div>
<div class="r" style="left:216.2px;top:659.68px;width:45.6px;height:4.97px;background:#E5BEE9;"></div>
<div class="r" style="left:216.2px;top:655.01px;width:45.6px;height:4.97px;background:#FBC7EC;"></div>
<div class="r" style="left:216.2px;top:650.34px;width:45.6px;height:4.97px;background:#E1D9FF;"></div>
<span class="t" style="left:163.90px;top:694.80px;font-size:11px;line-height:13px;color:#605e5c;transform:scaleX(0.9557);transform-origin:0 50%;">(Blank)</span>
<span class="t" style="left:227.30px;top:694.80px;font-size:11px;line-height:13px;color:#605e5c;letter-spacing:0.026px;">Done</span>
<span class="t" style="left:402.50px;top:694.80px;font-size:11px;line-height:13px;color:#605e5c;transform:scaleX(0.9586);transform-origin:0 50%;">(Blank)</span>
<span class="t" style="left:466.30px;top:694.80px;font-size:11px;line-height:13px;color:#605e5c;transform:scaleX(0.9773);transform-origin:0 50%;">Done</span>
<span class="t" style="left:172.20px;top:711.60px;font-size:12px;line-height:14px;color:#252423;transform:scaleX(0.9845);transform-origin:0 50%;">RESOLUTION</span>
<span class="t" style="left:410.90px;top:711.60px;font-size:12px;line-height:14px;color:#252423;transform:scaleX(0.9845);transform-origin:0 50%;">RESOLUTION</span>
<svg class="r" style="left:600px;top:300px" width="460" height="300" viewBox="600 300 460 300"><path d="M841.40 322.70A128 128 0 1 1 724.20 502.15L770.89 481.65A77 77 0 1 0 841.40 373.70Z" fill="#118DFF"/><path d="M724.20 502.15A128 128 0 0 1 713.83 461.19L764.66 457.01A77 77 0 0 0 770.89 481.65Z" fill="#A0A7D8"/><path d="M713.83 461.19A128 128 0 0 1 841.40 322.70L841.40 373.70A77 77 0 0 0 764.66 457.01Z" fill="#A0A7D8"/><path d="M764.66 457.01L713.83 461.19" stroke="#c3c7e8" stroke-width="1"/><path d="M724.6 353.2L735.2 353.2L744.9 361.4" fill="none" stroke="#b3b0ad" stroke-width="1"/><path d="M690.8 485.5L702.4 485.5L714.9 482.1" fill="none" stroke="#b3b0ad" stroke-width="1"/><path d="M951.5 522.2L962.1 529.5L972.8 529.5" fill="none" stroke="#b3b0ad" stroke-width="1"/></svg>
<span class="t" style="left:669.00px;top:347.70px;font-size:11px;line-height:13px;color:#605e5c;transform:scaleX(0.9422);transform-origin:0 50%;">5 (26.32%)</span>
<span class="t" style="left:679.88px;top:472.30px;font-size:11px;line-height:13px;color:#605e5c;">1</span>
<span class="t" style="left:650.20px;top:487.70px;font-size:11px;line-height:13px;color:#605e5c;transform:scaleX(0.9528);transform-origin:0 50%;">(5.26%)</span>
<span class="t" style="left:977.10px;top:523.50px;font-size:11px;line-height:13px;color:#605e5c;transform:scaleX(0.9595);transform-origin:0 50%;">13 (68.42%)</span>
<span class="t" style="left:1069.30px;top:420.60px;font-size:12px;line-height:14px;color:#605e5c;font-weight:bold;transform:scaleX(0.9616);transform-origin:0 50%;">RESOLUTION_DATE Year</span>
<div class="r" style="left:1069.7px;top:442.9px;width:9px;height:9px;background:#118DFF;border-radius:50%;"></div>
<span class="t" style="left:1081.40px;top:440.60px;font-size:12px;line-height:14px;color:#605e5c;transform:scaleX(0.9655);transform-origin:0 50%;">(Blank)</span>
<div class="r" style="left:1069.7px;top:466.0px;width:9px;height:9px;background:#A6A6A6;border-radius:50%;"></div>
<span class="t" style="left:1081.40px;top:463.70px;font-size:12px;line-height:14px;color:#605e5c;transform:scaleX(0.9777);transform-origin:0 50%;">2023</span>
<div class="r" style="left:38px;top:794px;width:1188px;height:2px;background:transparent;background:repeating-linear-gradient(to right,#323130 0 2px,transparent 2px 4px);"></div>
<svg class="r" style="left:10px;top:137px;" width="16" height="16" viewBox="0 0 16 16"><path d="M1.500 1V14.500H14.800" fill="none" stroke="#252423" stroke-width="1.200"/>
<rect x="3.500" y="4.500" width="2" height="8" fill="none" stroke="#252423" stroke-width="1"/>
<rect x="7.500" y="6.500" width="2" height="6" fill="none" stroke="#252423" stroke-width="1"/>
<rect x="11.500" y="2.500" width="2" height="10" fill="none" stroke="#252423" stroke-width="1"/></svg>
<svg class="r" style="left:10px;top:177px;" width="17" height="16" viewBox="0 0 17 16"><rect x="0.500" y="0.500" width="15" height="14" fill="none" stroke="#605e5c" stroke-width="1.100"/>
<path d="M0.500 2.500H15.500M0.500 6.500H15.500M0.500 10.500H15.500M5.500 2.500V14.500M10.500 2.500V14.500" stroke="#605e5c" stroke-width="1" fill="none"/></svg>
<svg class="r" style="left:9px;top:216px;" width="19" height="19" viewBox="0 0 19 19"><rect x="0.500" y="5.500" width="7" height="7" fill="none" stroke="#605e5c" stroke-width="1.100"/>
<rect x="10.500" y="0.500" width="7" height="7" fill="none" stroke="#605e5c" stroke-width="1.100"/>
<rect x="10.500" y="10.500" width="7" height="7" fill="none" stroke="#605e5c" stroke-width="1.100"/>
<path d="M0.500 9H7.500M10.500 4H17.500M10.500 14H17.500M4.500 5.500V3.500H10.500M4.500 12.500V14.500H10.500" fill="none" stroke="#605e5c" stroke-width="1"/></svg>
<svg class="r" style="left:1238px;top:136px;" width="18" height="16" viewBox="0 0 18 16"><path d="M1.200 1.400H16.600L10.700 8.600V14.400H7.100V8.600z" fill="none" stroke="#252423" stroke-width="1.500" stroke-linejoin="round"/></svg>
<span class="t" style="left:1263.40px;top:135.60px;font-size:15px;line-height:18px;color:#252423;letter-spacing:0.281px;-webkit-text-stroke:0.3px #252423;">Filters</span>
<svg class="r" style="left:1374px;top:138px;" width="14" height="10" viewBox="0 0 14 10"><path d="M1 6.500C2.500 0.500 11.500 0.500 13 6.500" fill="none" stroke="#252423" stroke-width="1.200"/><circle cx="7" cy="6" r="1.900" fill="none" stroke="#252423" stroke-width="1.200"/></svg>
<svg class="r" style="left:1403.7px;top:137.5px;" width="13" height="13" viewBox="0 0 13 13"><path d="M1 1L6.500 6.500 1 12M6.500 1L12 6.500 6.500 12" fill="none" stroke="#252423" stroke-width="1.200"/></svg>
<div class="r" style="left:1235px;top:170px;width:180px;height:31px;background:#ffffff;border:1px solid #8a8886;border-radius:2px;box-sizing:border-box;"></div>
<svg class="r" style="left:1246px;top:176.5px;" width="16" height="16" viewBox="0 0 16 16"><circle cx="9.800" cy="5.600" r="4.600" fill="none" stroke="#323130" stroke-width="1.150"/><path d="M6.600 9L0.700 15.200" stroke="#323130" stroke-width="1.150"/></svg>
<span class="t" style="left:1275.30px;top:177.40px;font-size:13px;line-height:16px;color:#252423;transform:scaleX(0.9371);transform-origin:0 50%;">Search</span>
<div class="r" style="left:1227px;top:205px;width:200px;height:1px;background:#c8c6c4;"></div>
<span class="t" style="left:1235.70px;top:224.30px;font-size:12px;line-height:14px;color:#252423;transform:scaleX(0.9824);transform-origin:0 50%;">Filters on this page</span>
<svg class="r" style="left:1403.8px;top:231.6px;" width="14" height="3" viewBox="0 0 14 3"><circle cx="1.0" cy="1.500" r="0.9" fill="#605e5c"/><circle cx="5.6" cy="1.500" r="0.9" fill="#605e5c"/><circle cx="10.2" cy="1.500" r="0.9" fill="#605e5c"/></svg>
<div class="r" style="left:1235px;top:247px;width:184px;height:46px;background:#ffffff;border:1px solid #c8c6c4;box-sizing:border-box;"></div>
<span class="t" style="left:1274.30px;top:264.40px;font-size:12px;line-height:14px;color:#252423;transform:scaleX(0.9902);transform-origin:0 50%;">Add data fields here</span>
<span class="t" style="left:1235.70px;top:321.20px;font-size:12px;line-height:14px;color:#252423;transform:scaleX(0.9681);transform-origin:0 50%;">Filters on all pages</span>
<svg class="r" style="left:1403.8px;top:328.8px;" width="14" height="3" viewBox="0 0 14 3"><circle cx="1.0" cy="1.500" r="0.9" fill="#605e5c"/><circle cx="5.6" cy="1.500" r="0.9" fill="#605e5c"/><circle cx="10.2" cy="1.500" r="0.9" fill="#605e5c"/></svg>
<div class="r" style="left:1235px;top:344px;width:184px;height:46px;background:#ffffff;border:1px solid #c8c6c4;box-sizing:border-box;"></div>
<span class="t" style="left:1274.30px;top:361.00px;font-size:12px;line-height:14px;color:#252423;transform:scaleX(0.9902);transform-origin:0 50%;">Add data fields here</span>
<span class="t" style="left:1436.50px;top:135.60px;font-size:15px;line-height:18px;color:#252423;letter-spacing:0.475px;-webkit-text-stroke:0.3px #252423;">Visualizations</span>
<svg class="r" style="left:1587.5px;top:137.5px;" width="13" height="13" viewBox="0 0 13 13"><path d="M1 1L6.500 6.500 1 12M6.500 1L12 6.500 6.500 12" fill="none" stroke="#252423" stroke-width="1.200"/></svg>
<span class="t" style="left:1436.50px;top:163.90px;font-size:12px;line-height:14px;color:#252423;letter-spacing:0.042px;-webkit-text-stroke:0.35px #252423;">Build visual</span>
<div class="r" style="left:1436px;top:182px;width:32px;height:31.5px;background:#d0cecc;border-radius:2px;"></div>
<svg class="r" style="left:1439px;top:184px;" width="26" height="28" viewBox="0 0 26 28">
<path d="M1.100 2.400H19.800" stroke="#252423" stroke-width="1.100"/>
<rect x="1.600" y="7.300" width="23" height="7" fill="#12836b"/>
<rect x="1.600" y="18.200" width="23" height="7" fill="#12836b"/>
<rect x="1.600" y="7.300" width="23" height="7" fill="none" stroke="#252423" stroke-width="1" stroke-dasharray="1.500 1.300"/>
<rect x="1.600" y="18.200" width="23" height="7" fill="none" stroke="#252423" stroke-width="1" stroke-dasharray="1.500 1.300"/>
</svg>
<svg class="r" style="left:1504px;top:184px;" width="28" height="28" viewBox="0 0 28 28">
<path d="M7 24.500H2.500V2.500H12.500L18 8V9.800" fill="none" stroke="#252423" stroke-width="1.200"/>
<path d="M12.500 2.500V8H18" fill="none" stroke="#252423" stroke-width="1.100"/>
<path d="M25.500 10.500C22 13 18.500 17 16.800 20.500L19 22.500C22 20 25 15.500 25.500 10.500z" fill="none" stroke="#252423" stroke-width="1.100" stroke-linejoin="round"/>
<path d="M16.500 21C13.500 21 13.500 24.500 10.500 25.500 14 27 18.500 25.500 18.800 23z" fill="none" stroke="#252423" stroke-width="1.100" stroke-linejoin="round"/>
</svg>
<svg class="r" style="left:1428px;top:218px" width="180" height="10" viewBox="0 0 180 10"><path d="M0 8.500H15.800L23.900 1.300 32 8.500H180" fill="#f3f2f1" stroke="#a19f9d" stroke-width="1.100"/></svg>
<div class="r" style="left:1428px;top:433px;width:180px;height:1px;background:#d2d0ce;"></div>
<svg class="r" style="left:1439.0px;top:237.9px;" width="18" height="18" viewBox="0 0 18 18"><path d="M0.600 0V17.400H18" fill="none" stroke="#3b3a39" stroke-width="1.200"/><rect x="1" y="2.5" width="4.5" height="4" fill="#ffffff" stroke="#3b3a39" stroke-width="1"/><rect x="5.5" y="2.5" width="6.5" height="4" fill="#83b9ec" stroke="#1f6fc0" stroke-width="1"/><rect x="1" y="10.5" width="7" height="4" fill="#ffffff" stroke="#3b3a39" stroke-width="1"/><rect x="8" y="10.5" width="8" height="4" fill="#c8c6c4" stroke="#979593" stroke-width="1"/></svg>
<svg class="r" style="left:1466.98px;top:237.9px;" width="18" height="18" viewBox="0 0 18 18"><path d="M0.600 0V17.400H18" fill="none" stroke="#3b3a39" stroke-width="1.200"/><rect x="3.5" y="5.5" width="4.5" height="6.5" fill="#83b9ec" stroke="#1f6fc0" stroke-width="1"/><rect x="3.5" y="12" width="4.5" height="5" fill="#ffffff" stroke="#3b3a39" stroke-width="1"/><rect x="11.5" y="2.5" width="4.5" height="8" fill="#c8c6c4" stroke="#979593" stroke-width="1"/><rect x="11.5" y="10.5" width="4.5" height="6.5" fill="#ffffff" stroke="#3b3a39" stroke-width="1"/></svg>
<svg class="r" style="left:1494.96px;top:237.9px;" width="18" height="18" viewBox="0 0 18 18"><path d="M0.800 0V17.200H18.500" fill="none" stroke="#3b3a39" stroke-width="1.600"/><rect x="1.5" y="0.8" width="16.5" height="3.4" fill="#83b9ec" stroke="#1f6fc0" stroke-width="1"/><rect x="1.5" y="4.8" width="10" height="3.2" fill="#ffffff" stroke="#3b3a39" stroke-width="1"/><rect x="1.5" y="8.6" width="6.5" height="2.8" fill="#c8c6c4" stroke="#979593" stroke-width="1"/><rect x="1.5" y="12.3" width="12" height="3.6" fill="#ffffff" stroke="#3b3a39" stroke-width="1"/></svg>
<svg class="r" style="left:1522.94px;top:237.9px;" width="18" height="18" viewBox="0 0 18 18"><path d="M0.800 0V17.200H18.500" fill="none" stroke="#3b3a39" stroke-width="1.600"/><rect x="1.5" y="0.8" width="4.5" height="16.4" fill="#83b9ec" stroke="#1f6fc0" stroke-width="1"/><rect x="6" y="7.5" width="3.5" height="9.7" fill="#ffffff" stroke="#3b3a39" stroke-width="1"/><rect x="9.5" y="9.5" width="3.5" height="7.7" fill="#c8c6c4" stroke="#979593" stroke-width="1"/><rect x="13" y="5" width="4.5" height="12.2" fill="#ffffff" stroke="#3b3a39" stroke-width="1"/></svg>
<svg class="r" style="left:1550.92px;top:237.9px;" width="18" height="18" viewBox="0 0 18 18"><path d="M0.600 0V17.400H18" fill="none" stroke="#3b3a39" stroke-width="1.200"/><rect x="1" y="2.5" width="3.5" height="4" fill="#ffffff" stroke="#3b3a39" stroke-width="1"/><rect x="4.5" y="2.5" width="11.5" height="4" fill="#83b9ec" stroke="#1f6fc0" stroke-width="1"/><rect x="1" y="10.5" width="9.5" height="4" fill="#ffffff" stroke="#3b3a39" stroke-width="1"/><rect x="10.5" y="10.5" width="5.5" height="4" fill="#c8c6c4" stroke="#979593" stroke-width="1"/></svg>
<svg class="r" style="left:1578.9px;top:237.9px;" width="18" height="18" viewBox="0 0 18 18"><path d="M0.600 0V17.400H18" fill="none" stroke="#3b3a39" stroke-width="1.200"/><rect x="3.5" y="2.5" width="4.5" height="11" fill="#83b9ec" stroke="#1f6fc0" stroke-width="1"/><rect x="3.5" y="13.5" width="4.5" height="3.5" fill="#ffffff" stroke="#3b3a39" stroke-width="1"/><rect x="11.5" y="2.5" width="4.5" height="5" fill="#c8c6c4" stroke="#979593" stroke-width="1"/><rect x="11.5" y="7.5" width="4.5" height="9.5" fill="#ffffff" stroke="#3b3a39" stroke-width="1"/></svg>
<svg class="r" style="left:1439.0px;top:265.88px;" width="18" height="18" viewBox="0 0 18 18"><path d="M0.600 0V17.400H18" fill="none" stroke="#3b3a39" stroke-width="1.200"/><path d="M0.600 13.800L11.300 3.500 18 9.800" fill="none" stroke="#1f6fc0" stroke-width="1.300"/><path d="M0.600 10.200L7 4 11.200 9.800 17.800 3.600" fill="none" stroke="#3b3a39" stroke-width="1.300"/></svg>
<svg class="r" style="left:1466.98px;top:265.88px;" width="18" height="18" viewBox="0 0 18 18"><path d="M10 8.500L13.500 0.800 17.400 7.500V17.400" fill="#c8c6c4" stroke="#979593" stroke-width="1"/><path d="M0.600 11L6.500 1.800 12.500 10" fill="#ffffff" stroke="#3b3a39" stroke-width="1.200"/><path d="M0.600 11.500L4.500 14.200 10.500 8 17.400 17.400H0.600z" fill="#83b9ec" stroke="#1f6fc0" stroke-width="1.200" stroke-linejoin="round"/></svg>
<svg class="r" style="left:1494.96px;top:265.88px;" width="18" height="18" viewBox="0 0 18 18"><path d="M0.600 0V17.400H18" fill="none" stroke="#3b3a39" stroke-width="1.200"/><path d="M1.200 3.500L6.200 8.500 12.500 2 14.500 5 17.800 5.500V13.500L12 8 6.200 14.500 1.200 9.500z" fill="#83b9ec" stroke="#1f6fc0" stroke-width="1.200" stroke-linejoin="round"/></svg>
<svg class="r" style="left:1522.94px;top:265.88px;" width="18" height="18" viewBox="0 0 18 18"><path d="M0.600 0V17.400H18" fill="none" stroke="#3b3a39" stroke-width="1.200"/><rect x="3.5" y="2.5" width="4" height="11" fill="#83b9ec" stroke="#1f6fc0" stroke-width="1"/><rect x="3.5" y="13.5" width="4" height="3.5" fill="#ffffff" stroke="#3b3a39" stroke-width="1"/><rect x="11.5" y="3" width="4" height="4.5" fill="#c8c6c4" stroke="#979593" stroke-width="1"/><rect x="11.5" y="7.5" width="4" height="9.5" fill="#ffffff" stroke="#3b3a39" stroke-width="1"/><path d="M0.600 16.800L6 10 11 13.500 17.600 6.500" fill="none" stroke="#3b3a39" stroke-width="1.300"/></svg>
<svg class="r" style="left:1550.92px;top:265.88px;" width="18" height="18" viewBox="0 0 18 18"><path d="M0.600 0V17.400H18" fill="none" stroke="#3b3a39" stroke-width="1.200"/><rect x="3.5" y="8.5" width="4" height="8.5" fill="#83b9ec" stroke="#1f6fc0" stroke-width="1"/><rect x="7.5" y="1.5" width="4" height="15.5" fill="#ffffff" stroke="#3b3a39" stroke-width="1"/><rect x="11.5" y="5.5" width="4" height="11.5" fill="#c8c6c4" stroke="#979593" stroke-width="1"/><path d="M0.600 16.800L5.500 10.500 11 13.500 17.600 6.500" fill="none" stroke="#3b3a39" stroke-width="1.300"/></svg>
<svg class="r" style="left:1578.9px;top:265.88px;" width="18" height="18" viewBox="0 0 18 18"><path d="M0.600 0V17.400H18" fill="none" stroke="#3b3a39" stroke-width="1.200"/><rect x="2.500" y="10.500" width="4" height="4" fill="#f0a030" stroke="#d8711c"/><rect x="7.500" y="9" width="3.500" height="3.500" fill="#f0a030" stroke="#d8711c"/><rect x="13" y="10.500" width="4" height="4" fill="#f0a030" stroke="#d8711c"/><path d="M2 3.500C5 3.500 6.500 7.500 9.500 7.500S14 3 17 2.500V5.500C14 6 12.500 10 9.500 10S5 6.500 2 6.500z" fill="#a19f9d" stroke="#797775" stroke-width="0.800"/><path d="M2 7.500C5 7.500 6.500 12.500 9.500 12.500S14 7.500 17 6.500V9.500C14 10.500 12.500 14.800 9.500 14.800S5 10.500 2 10.500z" fill="#5aa0e0" stroke="#1f6fc0" stroke-width="0.800"/></svg>
<svg class="r" style="left:1439.0px;top:293.86px;" width="18" height="18" viewBox="0 0 18 18"><path d="M0.600 0V17.400H18" fill="none" stroke="#3b3a39" stroke-width="1.200"/><rect x="2.3" y="5.2" width="2.6" height="12.2" fill="#ffffff" stroke="#3b3a39" stroke-width="1"/><rect x="7.6" y="5.4" width="1.3" height="5.1" fill="#c8c6c4" stroke="#979593" stroke-width="1"/><path d="M4.900 5.200H8.900M8.900 10.500H12" stroke="#3b3a39" stroke-width="1" fill="none"/><rect x="10.2" y="1" width="1.7" height="9.5" fill="#1f6fc0" stroke="#1f6fc0" stroke-width="1"/><rect x="13.2" y="1" width="3.3" height="16.4" fill="#ffffff" stroke="#3b3a39" stroke-width="1"/></svg>
<svg class="r" style="left:1466.98px;top:293.86px;" width="18" height="18" viewBox="0 0 18 18"><rect x="0.5" y="1.5" width="17" height="5" fill="#83b9ec" stroke="#1f6fc0" stroke-width="1.2"/><rect x="2.8" y="6.5" width="12.4" height="5" fill="#83b9ec" stroke="#1f6fc0" stroke-width="1.2"/><rect x="5.8" y="11.5" width="6.4" height="5" fill="#83b9ec" stroke="#1f6fc0" stroke-width="1.2"/></svg>
<svg class="r" style="left:1494.96px;top:293.86px;" width="18" height="18" viewBox="0 0 18 18"><path d="M0.600 0V17.400H18" fill="none" stroke="#3b3a39" stroke-width="1.200"/><rect x="3" y="4.500" width="2.600" height="2.600" fill="#83b9ec"/><rect x="8.200" y="7.800" width="2.600" height="2.600" fill="#83b9ec"/><rect x="13.300" y="11.500" width="2.600" height="2.600" fill="#83b9ec"/><rect x="13.300" y="1.500" width="2.600" height="2.600" fill="#252423"/><rect x="3.200" y="12.500" width="2.600" height="2.600" fill="#252423"/></svg>
<svg class="r" style="left:1522.94px;top:293.86px;" width="18" height="18" viewBox="0 0 18 18"><circle cx="9" cy="9" r="8.300" fill="#ffffff" stroke="#3b3a39" stroke-width="1.200"/><path d="M9 9V0.700A8.300 8.300 0 0 1 15.200 14.500z" fill="#83b9ec" stroke="#1f6fc0" stroke-width="1.200" stroke-linejoin="round"/></svg>
<svg class="r" style="left:1550.92px;top:293.86px;" width="18" height="18" viewBox="0 0 18 18"><circle cx="9" cy="9" r="6.200" fill="none" stroke="#83b9ec" stroke-width="4.400"/><circle cx="9" cy="9" r="8.400" fill="none" stroke="#1f6fc0" stroke-width="1.100"/><circle cx="9" cy="9" r="4" fill="none" stroke="#1f6fc0" stroke-width="1.100"/><path d="M9 0.600A8.400 8.400 0 0 0 0.600 9H5A4 4 0 0 1 9 5z" fill="#f3f2f1" stroke="#797775" stroke-width="1"/></svg>
<svg class="r" style="left:1578.9px;top:293.86px;" width="18" height="18" viewBox="0 0 18 18"><rect x="0.6" y="0.6" width="8" height="8.8" fill="#83b9ec" stroke="#1f6fc0" stroke-width="1.2"/><rect x="0.6" y="9.4" width="8" height="8" fill="#83b9ec" stroke="#1f6fc0" stroke-width="1.2"/><rect x="8.6" y="0.6" width="8.8" height="5" fill="#ffffff" stroke="#3b3a39" stroke-width="1.2"/><rect x="8.6" y="5.6" width="8.8" height="5.8" fill="#ffffff" stroke="#3b3a39" stroke-width="1.2"/><rect x="12.5" y="11.4" width="4.9" height="6" fill="#ffffff" stroke="#3b3a39" stroke-width="1.2"/><rect x="8.6" y="11.4" width="3.9" height="6" fill="#ffffff" stroke="#3b3a39" stroke-width="1.2"/></svg>
<svg class="r" style="left:1439.0px;top:321.84000000000003px;" width="18" height="18" viewBox="0 0 18 18"><circle cx="8" cy="8" r="5.300" fill="#2a9d4a" stroke="#3b3a39" stroke-width="1"/><path d="M6 5.500H8V8H10.500V10.500H8" stroke="#ffffff" stroke-width="1.400" fill="none"/><path d="M7 0.800A7.200 7.200 0 1 0 13 14.500" fill="none" stroke="#3b3a39" stroke-width="1.200"/><path d="M8.500 15V17M3.500 17.400H13.500" stroke="#3b3a39" stroke-width="1.100"/></svg>
<svg class="r" style="left:1466.98px;top:321.84000000000003px;" width="18" height="18" viewBox="0 0 18 18"><path d="M1.500 2.500L5.500 1.500 7 3.500 10 2.500 13.500 1.500H17.500V10L15 13.500 11 14 9 16.500 6 14 3 12 1.500 8z" fill="#c8c6c4" stroke="#605e5c" stroke-width="1"/><path d="M2 2.500L5.500 1.500 7 5 8.500 7.500 5 8.500 2 7z" fill="#83b9ec" stroke="#1f6fc0" stroke-width="1"/><path d="M10.500 9.500L17.500 8.500V10L15 13.500 11 14 9.500 15.500z" fill="#83b9ec" stroke="#1f6fc0" stroke-width="1"/></svg>
<svg class="r" style="left:1494.96px;top:321.84000000000003px;" width="18" height="18" viewBox="0 0 18 18"><path d="M11.500 0.500L15.500 17.500 9.500 13 1 15.500z" fill="#2b88d8"/><path d="M11.500 0.500L9.500 13 1 15.500z" fill="#3a9ad9"/><path d="M11.500 0.500L15.500 17.500 9.500 13z" fill="#1b78c8"/></svg>
<svg class="r" style="left:1522.94px;top:321.84000000000003px;" width="18" height="18" viewBox="0 0 18 18"><path d="M0.800 12.500A8.200 8.200 0 0 1 17.200 12.500H13.500A4.500 4.500 0 0 0 4.500 12.500z" fill="#ffffff" stroke="#3b3a39" stroke-width="1.200" stroke-linejoin="round"/><path d="M6.500 4.700A8.200 8.200 0 0 1 17.200 12.500H13.500A4.500 4.500 0 0 0 8 8.200z" fill="#5aa0e0" stroke="#1f6fc0" stroke-width="1"/><path d="M9 12.500L12.500 8.500" stroke="#252423" stroke-width="1.500"/></svg>
<svg class="r" style="left:1550.92px;top:321.84000000000003px;" width="18" height="18" viewBox="0 0 18 18"><rect x="0.6" y="2.6" width="16.8" height="13" fill="#ffffff" stroke="#3b3a39" stroke-width="1.2"/><path d="M2.500 13.500H15.500" stroke="#3b3a39" stroke-width="1"/><text x="9" y="11.600" font-size="9" text-anchor="middle" fill="#2b88d8" font-family="Liberation Sans" textLength="12" lengthAdjust="spacingAndGlyphs">123</text></svg>
<svg class="r" style="left:1578.9px;top:321.84000000000003px;" width="18" height="18" viewBox="0 0 18 18"><rect x="0.6" y="0.6" width="16.8" height="16.8" fill="#ffffff" stroke="#3b3a39" stroke-width="1.2"/><path d="M3.500 3.500V14.500" stroke="#605e5c" stroke-width="0.800"/><path d="M5 5H14.500M5 11H14.500" stroke="#1f6fc0" stroke-width="1.700"/><path d="M5 8H9.500M5 14H9.500" stroke="#797775" stroke-width="1"/></svg>
<svg class="r" style="left:1439.0px;top:349.82px;" width="18" height="18" viewBox="0 0 18 18"><rect x="0.6" y="1.6" width="16.8" height="13.8" fill="#ffffff" stroke="#3b3a39" stroke-width="1.2"/><path d="M2.500 9.500L5.200 4.800 7.900 9.500z" fill="#8fd19e" stroke="#2a9d4a" stroke-width="1"/><path d="M10 5L12.700 9.700 15.400 5z" fill="#f28b94" stroke="#d13438" stroke-width="1"/><path d="M2.500 12.500H15.500" stroke="#605e5c" stroke-width="1"/></svg>
<svg class="r" style="left:1466.98px;top:349.82px;" width="18" height="18" viewBox="0 0 18 18"><rect x="0.6" y="0.6" width="16.8" height="16.8" fill="#ffffff" stroke="#3b3a39" stroke-width="1.2"/><rect x="1.200" y="1.200" width="15.600" height="2.300" fill="#c8c6c4"/><rect x="3.500" y="6.500" width="3" height="3" fill="#c8c6c4" stroke="#605e5c"/><rect x="3.500" y="11.500" width="3" height="3" fill="#c8c6c4" stroke="#605e5c"/><path d="M9.500 9.500H18.500L15.500 13V18H12.800V13z" fill="#ffffff" stroke="#3b3a39" stroke-width="1.200" stroke-linejoin="round"/></svg>
<svg class="r" style="left:1494.96px;top:349.82px;" width="18" height="18" viewBox="0 0 18 18"><rect x="0.6" y="0.6" width="16.8" height="16.8" fill="#ffffff" stroke="#3b3a39" stroke-width="1.2"/><rect x="1.200" y="1.200" width="15.600" height="2.300" fill="#c8c6c4"/><path d="M0.600 4H17.400M0.600 8.500H17.400M0.600 13H17.400M6.200 4V17.400M11.800 4V17.400" stroke="#605e5c" stroke-width="1" fill="none"/></svg>
<svg class="r" style="left:1522.94px;top:349.82px;" width="18" height="18" viewBox="0 0 18 18"><rect x="0.6" y="0.6" width="16.8" height="16.8" fill="#ffffff" stroke="#3b3a39" stroke-width="1.2"/><rect x="1.200" y="1.200" width="15.600" height="2.300" fill="#c8c6c4"/><rect x="11.800" y="4" width="5.600" height="13.400" fill="#83b9ec"/><rect x="0.600" y="13" width="16.800" height="4.400" fill="#83b9ec"/><path d="M0.600 4H17.400M0.600 8.500H17.400M0.600 13H17.400M6.200 4V17.400M11.800 4V17.400" stroke="#3b3a39" stroke-width="1" fill="none"/></svg>
<svg class="r" style="left:1550.92px;top:349.82px;" width="18" height="18" viewBox="0 0 18 18"><text x="9" y="15.500" font-size="17" font-weight="bold" text-anchor="middle" fill="#2b88d8" font-family="Liberation Sans" textLength="10.500" lengthAdjust="spacingAndGlyphs">R</text></svg>
<svg class="r" style="left:1578.9px;top:349.82px;" width="18" height="18" viewBox="0 0 18 18"><text x="9" y="13.500" font-size="17" font-weight="bold" text-anchor="middle" fill="#2b88d8" font-family="Liberation Sans" textLength="18.500" lengthAdjust="spacingAndGlyphs">Py</text></svg>
<svg class="r" style="left:1439.0px;top:377.8px;" width="18" height="18" viewBox="0 0 18 18"><path d="M0.600 0V17.400H18" fill="none" stroke="#3b3a39" stroke-width="1.200"/><path d="M0.600 4H13" stroke="#1f6fc0" stroke-width="1.200"/><circle cx="14.800" cy="4" r="1.900" fill="#83b9ec" stroke="#1f6fc0" stroke-width="1.100"/><path d="M0.600 8.500H9.500M0.600 12.800H5.500" stroke="#797775" stroke-width="1.100"/><rect x="9.500" y="7.300" width="2.400" height="2.400" fill="#c8c6c4" stroke="#797775"/><rect x="5.500" y="11.600" width="2.400" height="2.400" fill="#c8c6c4" stroke="#797775"/></svg>
<svg class="r" style="left:1466.98px;top:377.8px;" width="18" height="18" viewBox="0 0 18 18"><path d="M7 9H9.500M9.500 3V15M9.500 3H11.500M9.500 9H11.500M9.500 15H11.500" stroke="#3b3a39" stroke-width="1.200" fill="none"/><rect x="0.6" y="7" width="6.4" height="4" fill="#83b9ec" stroke="#1f6fc0" stroke-width="1.2"/><rect x="11.5" y="1" width="6" height="4" fill="#83b9ec" stroke="#1f6fc0" stroke-width="1.2"/><rect x="11.5" y="7" width="6" height="4" fill="#83b9ec" stroke="#1f6fc0" stroke-width="1.2"/><rect x="11.5" y="13" width="6" height="4" fill="#83b9ec" stroke="#1f6fc0" stroke-width="1.2"/></svg>
<svg class="r" style="left:1494.96px;top:377.8px;" width="18" height="18" viewBox="0 0 18 18"><path d="M0.600 1.600H17.400V12.500H7.500L4 16.800V12.500H0.600z" fill="#ffffff" stroke="#1f6fc0" stroke-width="1.300" stroke-linejoin="round"/></svg>
<svg class="r" style="left:1522.94px;top:377.8px;" width="18" height="18" viewBox="0 0 18 18"><path d="M3 4.500V0.800H12L16.500 5.300V17.200H3V10" fill="#ffffff" stroke="#3b3a39" stroke-width="1.200"/><path d="M12 0.800V5.300H16.500" fill="none" stroke="#3b3a39" stroke-width="1.100"/><rect x="1.500" y="5.500" width="3" height="3" fill="#83b9ec" stroke="#1f6fc0"/><path d="M6 7H12.500M6 10.500H11" stroke="#1f6fc0" stroke-width="1.100"/></svg>
<svg class="r" style="left:1550.92px;top:377.8px;" width="18" height="18" viewBox="0 0 18 18"><path d="M4.500 1.500H13.500V7C13.500 10 11.500 12 9 12S4.500 10 4.500 7z" fill="#ffffff" stroke="#3b3a39" stroke-width="1.300"/><path d="M4.500 2.500H0.800C0.800 6 2 8 5 8.500M13.500 2.500H17.200C17.200 6 16 8 13 8.500" fill="none" stroke="#3b3a39" stroke-width="1.200"/><path d="M7 14.500C7.500 13.500 8 12.500 8 12H10C10 12.500 10.500 13.500 11 14.500z" fill="#ffffff" stroke="#3b3a39" stroke-width="1"/><rect x="4.500" y="0.800" width="9" height="2" fill="#83b9ec" stroke="#1f6fc0"/><rect x="4.500" y="15" width="9" height="2" fill="#83b9ec" stroke="#1f6fc0"/></svg>
<svg class="r" style="left:1578.9px;top:377.8px;" width="18" height="18" viewBox="0 0 18 18"><path d="M2.500 0.800H11.500L16 5.300V17.200H2.500z" fill="#e1dfdd" stroke="#3b3a39" stroke-width="1.300"/><path d="M11.500 0.800V5.300H16" fill="none" stroke="#3b3a39" stroke-width="1.100"/><rect x="4.500" y="11" width="2" height="4.500" fill="#3b3a39"/><rect x="8.200" y="13" width="2" height="2.500" fill="#3b3a39"/><rect x="11.800" y="8.500" width="2" height="7" fill="#3b3a39"/></svg>
<svg class="r" style="left:1439.0px;top:405.78px;" width="18" height="18" viewBox="0 0 18 18"><rect x="0.6" y="4.6" width="16.8" height="12.8" fill="#ffffff" stroke="#3b3a39" stroke-width="1.2"/><path d="M2.500 15.500H15.500" stroke="#3b3a39" stroke-width="1"/><text x="10.500" y="13.300" font-size="9" text-anchor="middle" fill="#2b88d8" font-family="Liberation Sans" textLength="11" lengthAdjust="spacingAndGlyphs">123</text><path d="M3.500 0.500H8L5.800 4.500H8L1.500 12.500 3.300 6.800H0.500z" fill="#f8b04a" stroke="#d8711c" stroke-width="0.900" stroke-linejoin="round"/></svg>
<svg class="r" style="left:1466.98px;top:405.78px;" width="18" height="18" viewBox="0 0 18 18"><path d="M5 2.500H17.500V5.500H14L10.500 10 7.500 13V17H1.500V12" fill="none" stroke="#1f6fc0" stroke-width="1.300"/><path d="M6.500 13L10 9 13.500 5.500" stroke="#83b9ec" stroke-width="2.600" fill="none"/><path d="M7 17.200H12.500" stroke="#1f6fc0" stroke-width="1.300"/><path d="M0.800 1.500C0.800 0.500 4.800 0.500 4.800 1.500V7L2.800 9.500 0.800 7z" fill="#e8822a" stroke="#d8711c" stroke-width="0.800"/><rect x="2" y="2.500" width="1.600" height="2" fill="#ffffff"/><circle cx="15.500" cy="15.500" r="2.300" fill="#e8822a"/><rect x="15.500" y="9.500" width="2.500" height="2.500" fill="#e8822a"/></svg>
<svg class="r" style="left:1494.96px;top:405.78px;" width="18" height="18" viewBox="0 0 18 18"><path d="M9 0.800L17.200 9 9 17.200 0.800 9z" fill="none" stroke="#9b4f96" stroke-width="1.300" stroke-linejoin="round"/><path d="M5 5L13 13M13 5L8 10M9 13.500L6.500 16" stroke="#9b4f96" stroke-width="1.200" fill="none"/><path d="M11 1.500L7.500 5M5 13L9 17" stroke="#9b4f96" stroke-width="1.100" fill="none"/></svg>
<svg class="r" style="left:1522.94px;top:405.78px;" width="18" height="18" viewBox="0 0 18 18"><path d="M0.800 2H11.500L17.500 9 11.500 16H0.800L6.800 9z" fill="#ffffff" stroke="#1f8ae6" stroke-width="1.300" stroke-linejoin="round"/><path d="M13 4L3.500 15.500M16 7.500L8.500 16" stroke="#1f8ae6" stroke-width="1.200"/></svg>
<svg class="r" style="left:1550.92px;top:405.78px;" width="18" height="18" viewBox="0 0 18 18"><circle cx="2.800" cy="8.800" r="0.950" fill="#484644"/><circle cx="9" cy="8.800" r="0.950" fill="#484644"/><circle cx="15.200" cy="8.800" r="0.950" fill="#484644"/></svg>
<span class="t" style="left:1440.50px;top:444.20px;font-size:12px;line-height:14px;color:#252423;transform:scaleX(0.9246);transform-origin:0 50%;">Values</span>
<div class="r" style="left:1432.5px;top:464.5px;width:169px;height:27px;background:#ffffff;border:1px dashed #c8c6c4;box-sizing:border-box;border-radius:2px;"></div>
<span class="t" style="left:1443.40px;top:472.20px;font-size:12px;line-height:14px;color:#252423;transform:scaleX(0.9949);transform-origin:0 50%;">Add data fields here</span>
<span class="t" style="left:1440.50px;top:504.10px;font-size:12px;line-height:14px;color:#252423;font-weight:bold;transform:scaleX(0.9557);transform-origin:0 50%;">Drill through</span>
<span class="t" style="left:1440.50px;top:528.90px;font-size:12px;line-height:14px;color:#252423;transform:scaleX(0.9853);transform-origin:0 50%;">Cross-report</span>
<div class="r" style="left:1554px;top:528px;width:32px;height:16px;background:#ffffff;border:1px solid #605e5c;border-radius:8px;box-sizing:border-box;"></div>
<div class="r" style="left:1559.2px;top:532.2px;width:7.6px;height:7.6px;background:#605e5c;border-radius:50%;"></div>
<span class="t" style="left:1568.50px;top:530.90px;font-size:10px;line-height:12px;color:#605e5c;transform:scaleX(0.9731);transform-origin:0 50%;">Off</span>
<span class="t" style="left:1440.50px;top:556.00px;font-size:12px;line-height:14px;color:#252423;transform:scaleX(0.9712);transform-origin:0 50%;">Keep all filters</span>
<div class="r" style="left:1554px;top:555px;width:32px;height:16px;background:#117865;border-radius:8px;"></div>
<div class="r" style="left:1573px;top:559.1px;width:7.8px;height:7.8px;background:#ffffff;border-radius:50%;"></div>
<span class="t" style="left:1559.50px;top:558.00px;font-size:10px;line-height:12px;color:#ffffff;font-weight:bold;transform:scaleX(0.8569);transform-origin:0 50%;">On</span>
<div class="r" style="left:1432.5px;top:581.5px;width:169px;height:25px;background:#ffffff;border:1px dashed #c8c6c4;box-sizing:border-box;border-radius:2px;"></div>
<span class="t" style="left:1441.20px;top:587.80px;font-size:12px;line-height:14px;color:#252423;letter-spacing:0.119px;">Add drill-through fields here</span>
<span class="t" style="left:1617.50px;top:135.60px;font-size:15px;line-height:18px;color:#252423;letter-spacing:0.304px;-webkit-text-stroke:0.3px #252423;">Data</span>
<svg class="r" style="left:1896px;top:138px;" width="12" height="12" viewBox="0 0 12 12"><path d="M1 1L11 11M11 1L1 11" stroke="#252423" stroke-width="1.200"/></svg>
<div class="r" style="left:1613px;top:170px;width:300px;height:27px;background:#ffffff;border:1px solid #605e5c;border-radius:2px;box-sizing:border-box;"></div>
<svg class="r" style="left:1620.5px;top:175.5px;" width="15" height="15" viewBox="0 0 15 15"><circle cx="9.300" cy="5.300" r="4.400" fill="none" stroke="#323130" stroke-width="1.100"/><path d="M6.200 8.500L0.600 14.400" stroke="#323130" stroke-width="1.100"/></svg>
<span class="t" style="left:1642.30px;top:175.90px;font-size:13.5px;line-height:16px;color:#252423;transform:scaleX(0.9375);transform-origin:0 50%;">Search</span>
<div class="r" style="left:1609px;top:204.500px;width:292px;height:767.500px;overflow:hidden;">
<div class="r" style="left:38.40000000000009px;top:-2.5999999999999943px;width:11.5px;height:11.5px;background:transparent;border:1px solid #8a8886;border-radius:2px;box-sizing:border-box;background:#f3f2f1;"></div>
<span class="t" style="left:76.50px;top:-3.60px;font-size:12px;line-height:14px;color:#252423;transform:scaleX(0.8719);transform-origin:0 50%;">DESCRIPTION</span>
<div class="r" style="left:38.40000000000009px;top:21.400000000000006px;width:11.5px;height:11.5px;background:transparent;border:1px solid #8a8886;border-radius:2px;box-sizing:border-box;background:#f3f2f1;"></div>
<svg class="r" style="left:24.200000000000045px;top:20.599999999999994px;" width="7" height="13" viewBox="0 0 7 13"><path d="M1 1L6 6.500 1 12" fill="none" stroke="#605e5c" stroke-width="1.100"/></svg>
<svg class="r" style="left:56px;top:18.599999999999994px;" width="16" height="16" viewBox="0 0 16 16"><rect x="0.600" y="2.500" width="14.800" height="12.900" fill="none" stroke="#252423" stroke-width="1.100"/><path d="M0.600 5.800H15.400" stroke="#252423" stroke-width="1.100"/><path d="M3.800 0.500V3M12.200 0.500V3" stroke="#252423" stroke-width="1.100"/><rect x="2.6" y="7.6" width="1.100" height="1.100" fill="#605e5c"/><rect x="5.2" y="7.6" width="1.100" height="1.100" fill="#605e5c"/><rect x="7.8" y="7.6" width="1.100" height="1.100" fill="#605e5c"/><rect x="10.4" y="7.6" width="1.100" height="1.100" fill="#605e5c"/><rect x="13.0" y="7.6" width="1.100" height="1.100" fill="#605e5c"/><rect x="2.6" y="9.9" width="1.100" height="1.100" fill="#605e5c"/><rect x="5.2" y="9.9" width="1.100" height="1.100" fill="#605e5c"/><rect x="7.8" y="9.9" width="1.100" height="1.100" fill="#605e5c"/><rect x="10.4" y="9.9" width="1.100" height="1.100" fill="#605e5c"/><rect x="13.0" y="9.9" width="1.100" height="1.100" fill="#605e5c"/><rect x="2.6" y="12.2" width="1.100" height="1.100" fill="#605e5c"/><rect x="5.2" y="12.2" width="1.100" height="1.100" fill="#605e5c"/><rect x="7.8" y="12.2" width="1.100" height="1.100" fill="#605e5c"/><rect x="10.4" y="12.2" width="1.100" height="1.100" fill="#605e5c"/><rect x="13.0" y="12.2" width="1.100" height="1.100" fill="#605e5c"/></svg>
<span class="t" style="left:76.50px;top:20.40px;font-size:12px;line-height:14px;color:#252423;transform:scaleX(0.8555);transform-origin:0 50%;">DUE_DATE</span>
<div class="r" style="left:38.40000000000009px;top:45.400000000000006px;width:11.5px;height:11.5px;background:transparent;border:1px solid #8a8886;border-radius:2px;box-sizing:border-box;background:#f3f2f1;"></div>
<span class="t" style="left:76.50px;top:44.40px;font-size:12px;line-height:14px;color:#252423;transform:scaleX(0.9191);transform-origin:0 50%;">ENVIRONMENT</span>
<div class="r" style="left:38.40000000000009px;top:69.40000000000003px;width:11.5px;height:11.5px;background:transparent;border:1px solid #8a8886;border-radius:2px;box-sizing:border-box;background:#f3f2f1;"></div>
<svg class="r" style="left:57px;top:67.10000000000002px;" width="13" height="16" viewBox="0 0 13 16"><path d="M11 3.500V1.500H2.500L7.500 8 2.500 14.500H11V12.500" fill="none" stroke="#252423" stroke-width="1.100" stroke-linejoin="miter"/></svg>
<span class="t" style="left:76.50px;top:68.40px;font-size:12px;line-height:14px;color:#252423;transform:scaleX(0.8430);transform-origin:0 50%;">ISSUE_ID</span>
<div class="r" style="left:38.40000000000009px;top:93.40000000000003px;width:11.5px;height:11.5px;background:transparent;border:1px solid #8a8886;border-radius:2px;box-sizing:border-box;background:#f3f2f1;"></div>
<span class="t" style="left:76.50px;top:92.40px;font-size:12px;line-height:14px;color:#252423;transform:scaleX(0.8096);transform-origin:0 50%;">ISSUE_KEY</span>
<div class="r" style="left:38.40000000000009px;top:117.40000000000003px;width:11.5px;height:11.5px;background:transparent;border:1px solid #8a8886;border-radius:2px;box-sizing:border-box;background:#f3f2f1;"></div>
<svg class="r" style="left:57px;top:115.10000000000002px;" width="13" height="16" viewBox="0 0 13 16"><path d="M11 3.500V1.500H2.500L7.500 8 2.500 14.500H11V12.500" fill="none" stroke="#252423" stroke-width="1.100" stroke-linejoin="miter"/></svg>
<span class="t" style="left:76.50px;top:116.40px;font-size:12px;line-height:14px;color:#252423;transform:scaleX(0.8465);transform-origin:0 50%;">ISSUE_STATUS_ID</span>
<div class="r" style="left:38.40000000000009px;top:141.40000000000003px;width:11.5px;height:11.5px;background:transparent;border:1px solid #8a8886;border-radius:2px;box-sizing:border-box;background:#f3f2f1;"></div>
<span class="t" style="left:76.50px;top:140.40px;font-size:12px;line-height:14px;color:#252423;transform:scaleX(0.8689);transform-origin:0 50%;">ISSUE_STATUS_NAME</span>
<div class="r" style="left:38.40000000000009px;top:165.40000000000003px;width:11.5px;height:11.5px;background:transparent;border:1px solid #8a8886;border-radius:2px;box-sizing:border-box;background:#f3f2f1;"></div>
<svg class="r" style="left:57px;top:163.10000000000002px;" width="13" height="16" viewBox="0 0 13 16"><path d="M11 3.500V1.500H2.500L7.500 8 2.500 14.500H11V12.500" fill="none" stroke="#252423" stroke-width="1.100" stroke-linejoin="miter"/></svg>
<span class="t" style="left:76.50px;top:164.40px;font-size:12px;line-height:14px;color:#252423;transform:scaleX(0.8295);transform-origin:0 50%;">ISSUE_TYPE_ID</span>
<div class="r" style="left:38.40000000000009px;top:189.40000000000003px;width:11.5px;height:11.5px;background:transparent;border:1px solid #8a8886;border-radius:2px;box-sizing:border-box;background:#f3f2f1;"></div>
<span class="t" style="left:76.50px;top:188.40px;font-size:12px;line-height:14px;color:#252423;transform:scaleX(0.8555);transform-origin:0 50%;">ISSUE_TYPE_NAME</span>
<div class="r" style="left:38.40000000000009px;top:213.40000000000003px;width:11.5px;height:11.5px;background:transparent;border:1px solid #8a8886;border-radius:2px;box-sizing:border-box;background:#f3f2f1;"></div>
<svg class="r" style="left:24.200000000000045px;top:212.60000000000002px;" width="7" height="13" viewBox="0 0 7 13"><path d="M1 1L6 6.500 1 12" fill="none" stroke="#605e5c" stroke-width="1.100"/></svg>
<svg class="r" style="left:56px;top:210.60000000000002px;" width="16" height="16" viewBox="0 0 16 16"><rect x="0.600" y="2.500" width="14.800" height="12.900" fill="none" stroke="#252423" stroke-width="1.100"/><path d="M0.600 5.800H15.400" stroke="#252423" stroke-width="1.100"/><path d="M3.800 0.500V3M12.200 0.500V3" stroke="#252423" stroke-width="1.100"/><rect x="2.6" y="7.6" width="1.100" height="1.100" fill="#605e5c"/><rect x="5.2" y="7.6" width="1.100" height="1.100" fill="#605e5c"/><rect x="7.8" y="7.6" width="1.100" height="1.100" fill="#605e5c"/><rect x="10.4" y="7.6" width="1.100" height="1.100" fill="#605e5c"/><rect x="13.0" y="7.6" width="1.100" height="1.100" fill="#605e5c"/><rect x="2.6" y="9.9" width="1.100" height="1.100" fill="#605e5c"/><rect x="5.2" y="9.9" width="1.100" height="1.100" fill="#605e5c"/><rect x="7.8" y="9.9" width="1.100" height="1.100" fill="#605e5c"/><rect x="10.4" y="9.9" width="1.100" height="1.100" fill="#605e5c"/><rect x="13.0" y="9.9" width="1.100" height="1.100" fill="#605e5c"/><rect x="2.6" y="12.2" width="1.100" height="1.100" fill="#605e5c"/><rect x="5.2" y="12.2" width="1.100" height="1.100" fill="#605e5c"/><rect x="7.8" y="12.2" width="1.100" height="1.100" fill="#605e5c"/><rect x="10.4" y="12.2" width="1.100" height="1.100" fill="#605e5c"/><rect x="13.0" y="12.2" width="1.100" height="1.100" fill="#605e5c"/></svg>
<span class="t" style="left:76.50px;top:212.40px;font-size:12px;line-height:14px;color:#252423;transform:scaleX(0.8688);transform-origin:0 50%;">LAST_VIEWED</span>
<div class="r" style="left:38.40000000000009px;top:237.40000000000003px;width:11.5px;height:11.5px;background:transparent;border:1px solid #8a8886;border-radius:2px;box-sizing:border-box;background:#f3f2f1;"></div>
<svg class="r" style="left:57px;top:235.10000000000002px;" width="13" height="16" viewBox="0 0 13 16"><path d="M11 3.500V1.500H2.500L7.500 8 2.500 14.500H11V12.500" fill="none" stroke="#252423" stroke-width="1.100" stroke-linejoin="miter"/></svg>
<span class="t" style="left:76.50px;top:236.40px;font-size:12px;line-height:14px;color:#252423;transform:scaleX(0.8512);transform-origin:0 50%;">PARENT_ISSUE_ID</span>
<div class="r" style="left:38.40000000000009px;top:261.40000000000003px;width:11.5px;height:11.5px;background:transparent;border:1px solid #8a8886;border-radius:2px;box-sizing:border-box;background:#f3f2f1;"></div>
<span class="t" style="left:76.50px;top:260.40px;font-size:12px;line-height:14px;color:#252423;transform:scaleX(0.8394);transform-origin:0 50%;">PARENT_ISSUE_KEY</span>
<div class="r" style="left:38.40000000000009px;top:285.40000000000003px;width:11.5px;height:11.5px;background:transparent;border:1px solid #8a8886;border-radius:2px;box-sizing:border-box;background:#f3f2f1;"></div>
<svg class="r" style="left:57px;top:283.1px;" width="13" height="16" viewBox="0 0 13 16"><path d="M11 3.500V1.500H2.500L7.500 8 2.500 14.500H11V12.500" fill="none" stroke="#252423" stroke-width="1.100" stroke-linejoin="miter"/></svg>
<span class="t" style="left:76.50px;top:284.40px;font-size:12px;line-height:14px;color:#252423;transform:scaleX(0.8545);transform-origin:0 50%;">PARENT_ISSUE_STATUS_ID</span>
<div class="r" style="left:38.40000000000009px;top:309.4px;width:11.5px;height:11.5px;background:transparent;border:1px solid #8a8886;border-radius:2px;box-sizing:border-box;background:#f3f2f1;"></div>
<span class="t" style="left:76.50px;top:308.40px;font-size:12px;line-height:14px;color:#252423;transform:scaleX(0.8672);transform-origin:0 50%;">PARENT_ISSUE_STATUS_NAME</span>
<div class="r" style="left:38.40000000000009px;top:333.4px;width:11.5px;height:11.5px;background:transparent;border:1px solid #8a8886;border-radius:2px;box-sizing:border-box;background:#f3f2f1;"></div>
<svg class="r" style="left:57px;top:331.1px;" width="13" height="16" viewBox="0 0 13 16"><path d="M11 3.500V1.500H2.500L7.500 8 2.500 14.500H11V12.500" fill="none" stroke="#252423" stroke-width="1.100" stroke-linejoin="miter"/></svg>
<span class="t" style="left:76.50px;top:332.40px;font-size:12px;line-height:14px;color:#252423;transform:scaleX(0.8426);transform-origin:0 50%;">PARENT_ISSUE_TYPE_ID</span>
<div class="r" style="left:38.40000000000009px;top:357.4px;width:11.5px;height:11.5px;background:transparent;border:1px solid #8a8886;border-radius:2px;box-sizing:border-box;background:#f3f2f1;"></div>
<span class="t" style="left:76.50px;top:356.40px;font-size:12px;line-height:14px;color:#252423;transform:scaleX(0.8585);transform-origin:0 50%;">PARENT_ISSUE_TYPE_NAME</span>
<div class="r" style="left:38.40000000000009px;top:381.4px;width:11.5px;height:11.5px;background:transparent;border:1px solid #8a8886;border-radius:2px;box-sizing:border-box;background:#f3f2f1;"></div>
<span class="t" style="left:76.50px;top:380.40px;font-size:12px;line-height:14px;color:#252423;transform:scaleX(0.8630);transform-origin:0 50%;">PARENT_PRIORITY</span>
<div class="r" style="left:38.40000000000009px;top:405.4px;width:11.5px;height:11.5px;background:transparent;border:1px solid #8a8886;border-radius:2px;box-sizing:border-box;background:#f3f2f1;"></div>
<span class="t" style="left:76.50px;top:404.40px;font-size:12px;line-height:14px;color:#252423;transform:scaleX(0.8576);transform-origin:0 50%;">PRIORITY</span>
<div class="r" style="left:38.40000000000009px;top:429.4px;width:11.5px;height:11.5px;background:transparent;border:1px solid #8a8886;border-radius:2px;box-sizing:border-box;background:#f3f2f1;"></div>
<svg class="r" style="left:57px;top:427.1px;" width="13" height="16" viewBox="0 0 13 16"><path d="M11 3.500V1.500H2.500L7.500 8 2.500 14.500H11V12.500" fill="none" stroke="#252423" stroke-width="1.100" stroke-linejoin="miter"/></svg>
<span class="t" style="left:76.50px;top:428.40px;font-size:12px;line-height:14px;color:#252423;transform:scaleX(0.8356);transform-origin:0 50%;">PROJECT_ID</span>
<div class="r" style="left:38.40000000000009px;top:453.4px;width:11.5px;height:11.5px;background:transparent;border:1px solid #8a8886;border-radius:2px;box-sizing:border-box;background:#f3f2f1;"></div>
<span class="t" style="left:76.50px;top:452.40px;font-size:12px;line-height:14px;color:#252423;transform:scaleX(0.8144);transform-origin:0 50%;">PROJECT_KEY</span>
<div class="r" style="left:38.40000000000009px;top:477.4px;width:11.5px;height:11.5px;background:transparent;border:1px solid #8a8886;border-radius:2px;box-sizing:border-box;background:#f3f2f1;"></div>
<span class="t" style="left:76.50px;top:476.40px;font-size:12px;line-height:14px;color:#252423;transform:scaleX(0.8588);transform-origin:0 50%;">REPORTER_ACCOUNT_ID</span>
<div class="r" style="left:38.40000000000009px;top:501.4px;width:11.5px;height:11.5px;background:transparent;border:1px solid #8a8886;border-radius:2px;box-sizing:border-box;background:#f3f2f1;"></div>
<span class="t" style="left:76.50px;top:500.40px;font-size:12px;line-height:14px;color:#252423;transform:scaleX(0.8608);transform-origin:0 50%;">REPORTER_NAME</span>
<div class="r" style="left:38.40000000000009px;top:525.4px;width:11.5px;height:11.5px;background:transparent;border:1px solid #8a8886;border-radius:2px;box-sizing:border-box;background:#f3f2f1;"></div>
<span class="t" style="left:76.50px;top:524.40px;font-size:12px;line-height:14px;color:#252423;transform:scaleX(0.8794);transform-origin:0 50%;">RESOLUTION</span>
<div class="r" style="left:38.40000000000009px;top:549.4px;width:11.5px;height:11.5px;background:transparent;border:1px solid #8a8886;border-radius:2px;box-sizing:border-box;background:#f3f2f1;"></div>
<svg class="r" style="left:24.200000000000045px;top:548.6px;" width="7" height="13" viewBox="0 0 7 13"><path d="M1 1L6 6.500 1 12" fill="none" stroke="#605e5c" stroke-width="1.100"/></svg>
<svg class="r" style="left:56px;top:546.6px;" width="16" height="16" viewBox="0 0 16 16"><rect x="0.600" y="2.500" width="14.800" height="12.900" fill="none" stroke="#252423" stroke-width="1.100"/><path d="M0.600 5.800H15.400" stroke="#252423" stroke-width="1.100"/><path d="M3.800 0.500V3M12.200 0.500V3" stroke="#252423" stroke-width="1.100"/><rect x="2.6" y="7.6" width="1.100" height="1.100" fill="#605e5c"/><rect x="5.2" y="7.6" width="1.100" height="1.100" fill="#605e5c"/><rect x="7.8" y="7.6" width="1.100" height="1.100" fill="#605e5c"/><rect x="10.4" y="7.6" width="1.100" height="1.100" fill="#605e5c"/><rect x="13.0" y="7.6" width="1.100" height="1.100" fill="#605e5c"/><rect x="2.6" y="9.9" width="1.100" height="1.100" fill="#605e5c"/><rect x="5.2" y="9.9" width="1.100" height="1.100" fill="#605e5c"/><rect x="7.8" y="9.9" width="1.100" height="1.100" fill="#605e5c"/><rect x="10.4" y="9.9" width="1.100" height="1.100" fill="#605e5c"/><rect x="13.0" y="9.9" width="1.100" height="1.100" fill="#605e5c"/><rect x="2.6" y="12.2" width="1.100" height="1.100" fill="#605e5c"/><rect x="5.2" y="12.2" width="1.100" height="1.100" fill="#605e5c"/><rect x="7.8" y="12.2" width="1.100" height="1.100" fill="#605e5c"/><rect x="10.4" y="12.2" width="1.100" height="1.100" fill="#605e5c"/><rect x="13.0" y="12.2" width="1.100" height="1.100" fill="#605e5c"/></svg>
<span class="t" style="left:76.50px;top:548.40px;font-size:12px;line-height:14px;color:#252423;transform:scaleX(0.8731);transform-origin:0 50%;">RESOLUTION_DATE</span>
<div class="r" style="left:38.40000000000009px;top:573.4px;width:11.5px;height:11.5px;background:transparent;border:1px solid #8a8886;border-radius:2px;box-sizing:border-box;background:#f3f2f1;"></div>
<span class="t" style="left:76.50px;top:572.40px;font-size:12px;line-height:14px;color:#252423;transform:scaleX(0.8559);transform-origin:0 50%;">SECURITY_LEVEL_NAME</span>
<div class="r" style="left:38.40000000000009px;top:597.4px;width:11.5px;height:11.5px;background:transparent;border:1px solid #8a8886;border-radius:2px;box-sizing:border-box;background:#f3f2f1;"></div>
<svg class="r" style="left:24.200000000000045px;top:596.6px;" width="7" height="13" viewBox="0 0 7 13"><path d="M1 1L6 6.500 1 12" fill="none" stroke="#605e5c" stroke-width="1.100"/></svg>
<svg class="r" style="left:56px;top:594.6px;" width="16" height="16" viewBox="0 0 16 16"><rect x="0.600" y="2.500" width="14.800" height="12.900" fill="none" stroke="#252423" stroke-width="1.100"/><path d="M0.600 5.800H15.400" stroke="#252423" stroke-width="1.100"/><path d="M3.800 0.500V3M12.200 0.500V3" stroke="#252423" stroke-width="1.100"/><rect x="2.6" y="7.6" width="1.100" height="1.100" fill="#605e5c"/><rect x="5.2" y="7.6" width="1.100" height="1.100" fill="#605e5c"/><rect x="7.8" y="7.6" width="1.100" height="1.100" fill="#605e5c"/><rect x="10.4" y="7.6" width="1.100" height="1.100" fill="#605e5c"/><rect x="13.0" y="7.6" width="1.100" height="1.100" fill="#605e5c"/><rect x="2.6" y="9.9" width="1.100" height="1.100" fill="#605e5c"/><rect x="5.2" y="9.9" width="1.100" height="1.100" fill="#605e5c"/><rect x="7.8" y="9.9" width="1.100" height="1.100" fill="#605e5c"/><rect x="10.4" y="9.9" width="1.100" height="1.100" fill="#605e5c"/><rect x="13.0" y="9.9" width="1.100" height="1.100" fill="#605e5c"/><rect x="2.6" y="12.2" width="1.100" height="1.100" fill="#605e5c"/><rect x="5.2" y="12.2" width="1.100" height="1.100" fill="#605e5c"/><rect x="7.8" y="12.2" width="1.100" height="1.100" fill="#605e5c"/><rect x="10.4" y="12.2" width="1.100" height="1.100" fill="#605e5c"/><rect x="13.0" y="12.2" width="1.100" height="1.100" fill="#605e5c"/></svg>
<span class="t" style="left:76.50px;top:596.40px;font-size:12px;line-height:14px;color:#252423;transform:scaleX(0.8648);transform-origin:0 50%;">STATUS_CATEGORY_CHANGE_DATE</span>
<div class="r" style="left:38.40000000000009px;top:621.4px;width:11.5px;height:11.5px;background:transparent;border:1px solid #8a8886;border-radius:2px;box-sizing:border-box;background:#f3f2f1;"></div>
<span class="t" style="left:76.50px;top:620.40px;font-size:12px;line-height:14px;color:#252423;transform:scaleX(0.9277);transform-origin:0 50%;">SUMMARY</span>
<div class="r" style="left:38.40000000000009px;top:645.4px;width:11.5px;height:11.5px;background:transparent;border:1px solid #8a8886;border-radius:2px;box-sizing:border-box;background:#f3f2f1;"></div>
<svg class="r" style="left:24.200000000000045px;top:644.6px;" width="7" height="13" viewBox="0 0 7 13"><path d="M1 1L6 6.500 1 12" fill="none" stroke="#605e5c" stroke-width="1.100"/></svg>
<svg class="r" style="left:56px;top:642.6px;" width="16" height="16" viewBox="0 0 16 16"><rect x="0.600" y="2.500" width="14.800" height="12.900" fill="none" stroke="#252423" stroke-width="1.100"/><path d="M0.600 5.800H15.400" stroke="#252423" stroke-width="1.100"/><path d="M3.800 0.500V3M12.200 0.500V3" stroke="#252423" stroke-width="1.100"/><rect x="2.6" y="7.6" width="1.100" height="1.100" fill="#605e5c"/><rect x="5.2" y="7.6" width="1.100" height="1.100" fill="#605e5c"/><rect x="7.8" y="7.6" width="1.100" height="1.100" fill="#605e5c"/><rect x="10.4" y="7.6" width="1.100" height="1.100" fill="#605e5c"/><rect x="13.0" y="7.6" width="1.100" height="1.100" fill="#605e5c"/><rect x="2.6" y="9.9" width="1.100" height="1.100" fill="#605e5c"/><rect x="5.2" y="9.9" width="1.100" height="1.100" fill="#605e5c"/><rect x="7.8" y="9.9" width="1.100" height="1.100" fill="#605e5c"/><rect x="10.4" y="9.9" width="1.100" height="1.100" fill="#605e5c"/><rect x="13.0" y="9.9" width="1.100" height="1.100" fill="#605e5c"/><rect x="2.6" y="12.2" width="1.100" height="1.100" fill="#605e5c"/><rect x="5.2" y="12.2" width="1.100" height="1.100" fill="#605e5c"/><rect x="7.8" y="12.2" width="1.100" height="1.100" fill="#605e5c"/><rect x="10.4" y="12.2" width="1.100" height="1.100" fill="#605e5c"/><rect x="13.0" y="12.2" width="1.100" height="1.100" fill="#605e5c"/></svg>
<span class="t" style="left:76.50px;top:644.40px;font-size:12px;line-height:14px;color:#252423;transform:scaleX(0.8840);transform-origin:0 50%;">UPDATED</span>
<div class="r" style="left:38.40000000000009px;top:669.4px;width:11.5px;height:11.5px;background:transparent;border:1px solid #8a8886;border-radius:2px;box-sizing:border-box;background:#f3f2f1;"></div>
<svg class="r" style="left:57px;top:667.1px;" width="13" height="16" viewBox="0 0 13 16"><path d="M11 3.500V1.500H2.500L7.500 8 2.500 14.500H11V12.500" fill="none" stroke="#252423" stroke-width="1.100" stroke-linejoin="miter"/></svg>
<span class="t" style="left:76.50px;top:668.40px;font-size:12px;line-height:14px;color:#252423;transform:scaleX(0.8211);transform-origin:0 50%;">VOTES</span>
<div class="r" style="left:38.40000000000009px;top:693.4px;width:11.5px;height:11.5px;background:transparent;border:1px solid #8a8886;border-radius:2px;box-sizing:border-box;background:#f3f2f1;"></div>
<svg class="r" style="left:57px;top:691.1px;" width="13" height="16" viewBox="0 0 13 16"><path d="M11 3.500V1.500H2.500L7.500 8 2.500 14.500H11V12.500" fill="none" stroke="#252423" stroke-width="1.100" stroke-linejoin="miter"/></svg>
<span class="t" style="left:76.50px;top:692.40px;font-size:12px;line-height:14px;color:#252423;transform:scaleX(0.8555);transform-origin:0 50%;">WATCHERS</span>
<div class="r" style="left:38.40000000000009px;top:717.4px;width:11.5px;height:11.5px;background:transparent;border:1px solid #8a8886;border-radius:2px;box-sizing:border-box;background:#f3f2f1;"></div>
<svg class="r" style="left:57px;top:715.1px;" width="13" height="16" viewBox="0 0 13 16"><path d="M11 3.500V1.500H2.500L7.500 8 2.500 14.500H11V12.500" fill="none" stroke="#252423" stroke-width="1.100" stroke-linejoin="miter"/></svg>
<span class="t" style="left:76.50px;top:716.40px;font-size:12px;line-height:14px;color:#252423;transform:scaleX(0.8924);transform-origin:0 50%;">WORK_RATIO</span>
</div>
<svg class="r" style="left:1618.3px;top:945px;" width="7" height="13" viewBox="0 0 7 13"><path d="M1 1L6 6.500 1 12" fill="none" stroke="#605e5c" stroke-width="1.100"/></svg>
<svg class="r" style="left:1631px;top:945.5px;" width="13" height="12" viewBox="0 0 13 12"><rect x="0.600" y="0.600" width="11.800" height="10.800" fill="none" stroke="#252423" stroke-width="1.100"/><rect x="0.600" y="0.600" width="11.800" height="1.700" fill="#252423"/><path d="M0.600 3.200H12.400M0.600 6H12.400M0.600 8.700H12.400M4.500 3V11.400M8.500 3V11.400" stroke="#252423" stroke-width="1"/></svg>
<span class="t" style="left:1650.30px;top:944.60px;font-size:12px;line-height:14px;color:#252423;transform:scaleX(0.9496);transform-origin:0 50%;">RemoteLinks</span>
<svg class="r" style="left:48px;top:943px;" width="22" height="16" viewBox="0 0 22 16"><rect x="1.300" y="1.800" width="18.200" height="10.600" rx="0.800" fill="none" stroke="#252423" stroke-width="1.500"/><path d="M10.400 12.500V14.600M6.500 14.800H14.300" stroke="#252423" stroke-width="1.300"/></svg>
<div class="r" style="left:47.3px;top:965px;width:23.6px;height:3px;background:#117865;border-radius:1.500px;"></div>
<svg class="r" style="left:96px;top:941px;" width="14" height="22" viewBox="0 0 14 22"><rect x="1.300" y="1.500" width="11.400" height="19" rx="1.300" fill="none" stroke="#484644" stroke-width="1.200"/><path d="M6 17.800H8" stroke="#484644" stroke-width="1.200"/></svg>
<svg class="r" style="left:130px;top:951px;" width="6" height="9" viewBox="0 0 6 9"><path d="M4.800 0.500L0.600 4.300 4.800 8.100z" fill="#c8c6c4"/></svg>
<svg class="r" style="left:152.5px;top:951px;" width="6" height="9" viewBox="0 0 6 9"><path d="M0.700 0.500L4.900 4.300 0.700 8.100z" fill="#c8c6c4"/></svg>
<div class="r" style="left:164.5px;top:937px;width:76px;height:35px;background:#ffffff;border-left:1px solid #c8c6c4;border-right:1px solid #c8c6c4;box-sizing:border-box;"></div>
<div class="r" style="left:164.5px;top:968px;width:76px;height:4px;background:#117865;"></div>
<span class="t" style="left:185.20px;top:948.10px;font-size:12px;line-height:14px;color:#252423;transform:scaleX(0.9018);transform-origin:0 50%;-webkit-text-stroke:0.3px #252423;">Page 1</span>
<div class="r" style="left:241px;top:939px;width:39px;height:32px;background:#117865;"></div>
<svg class="r" style="left:254px;top:949px;" width="13" height="13" viewBox="0 0 13 13"><path d="M6.500 1V12M1 6.500H12" stroke="#ffffff" stroke-width="2.300"/></svg>
<span class="t" style="left:2.50px;top:978.20px;font-size:12px;line-height:14px;color:#484644;transform:scaleX(0.9530);transform-origin:0 50%;">Page 1 of 1</span>
<span class="t" style="left:1512.00px;top:977.20px;font-size:12px;line-height:14px;color:#484644;font-weight:bold;">-</span>
<div class="r" style="left:1521px;top:984.5px;width:100px;height:1px;background:#605e5c;"></div>
<div class="r" style="left:1566px;top:979px;width:4px;height:11px;background:#605e5c;"></div>
<div class="r" style="left:1570px;top:983.5px;width:2px;height:3px;background:#605e5c;"></div>
<svg class="r" style="left:1627px;top:981px;" width="8" height="8" viewBox="0 0 8 8"><path d="M4 0.500V7.500M0.500 4H7.500" stroke="#484644" stroke-width="1.100"/></svg>
<span class="t" style="left:1652.20px;top:978.00px;font-size:12px;line-height:14px;color:#484644;transform:scaleX(0.9118);transform-origin:0 50%;">93%</span>
<svg class="r" style="left:1690px;top:979px;" width="17" height="13" viewBox="0 0 17 13"><rect x="0.600" y="0.600" width="15.200" height="11.200" fill="none" stroke="#484644" stroke-width="1.100"/><path d="M3 5V3H5.500M11 3H13.500V5M13.500 7.500V9.500H11M5.500 9.500H3V7.500" fill="none" stroke="#484644" stroke-width="1"/></svg>
<span class="t" style="left:1720.20px;top:978.00px;font-size:12px;line-height:14px;color:#484644;transform:scaleX(0.9890);transform-origin:0 50%;">Update available (click to download)</span>
</body></html>
